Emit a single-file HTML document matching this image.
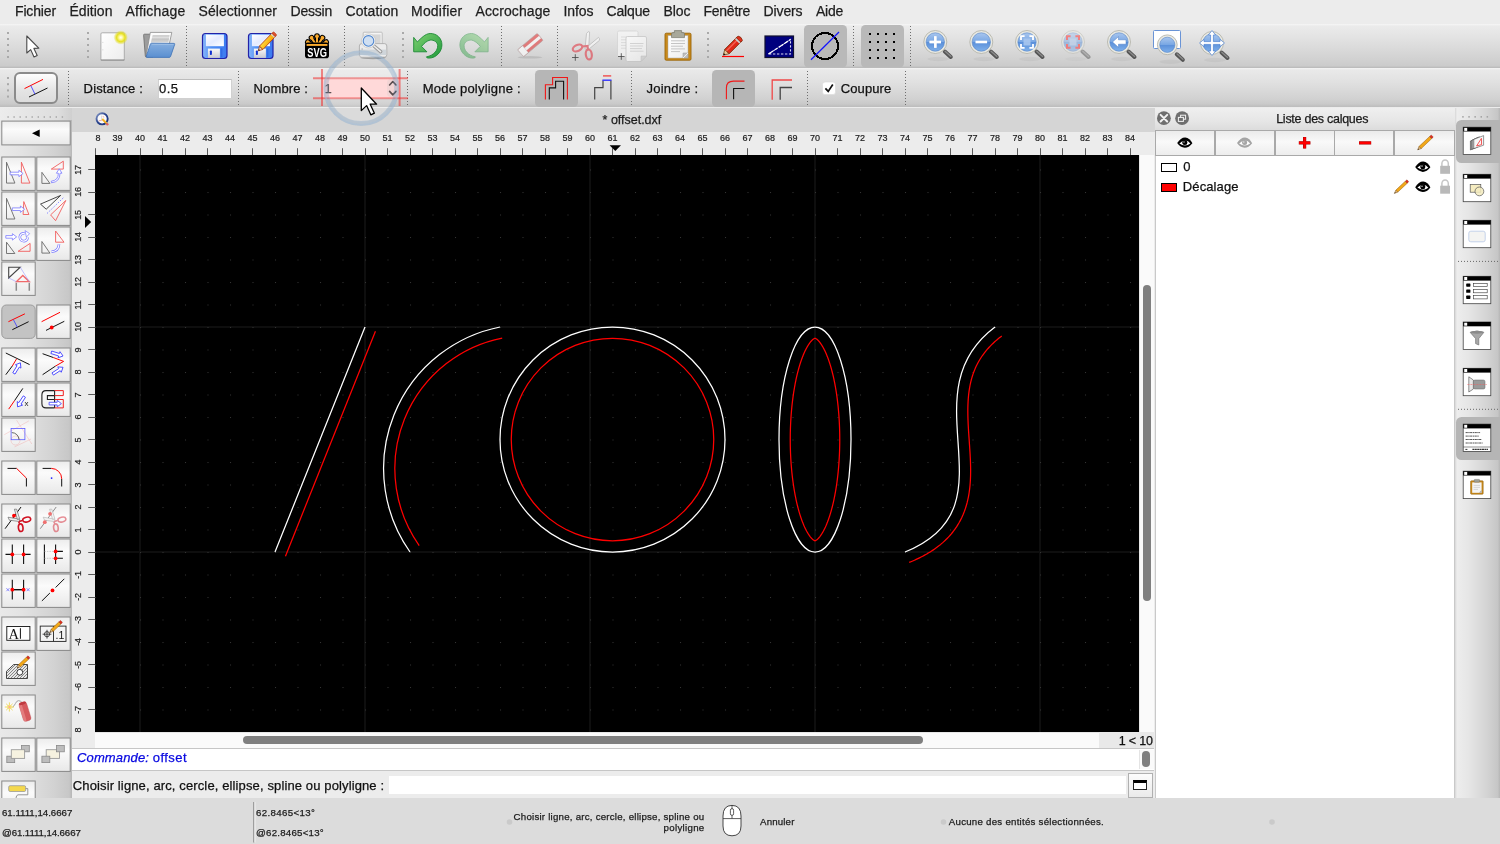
<!DOCTYPE html>
<html lang="fr"><head><meta charset="utf-8"><title>offset.dxf</title>
<style>

html,body{margin:0;padding:0}
body{width:1500px;height:844px;overflow:hidden;background:#ececec;font-family:"Liberation Sans",sans-serif;}
#app{position:relative;width:1500px;height:844px;overflow:hidden;background:#ececec;will-change:transform}
.a{position:absolute}
.t{position:absolute;white-space:pre;font-family:"Liberation Sans",sans-serif;-webkit-text-stroke:0.25px currentColor}
svg{position:absolute;overflow:visible}


#menu{left:0;top:0;width:1500px;height:24px;background:#ececec}


#tb1{left:0;top:24px;width:1500px;height:44px;background:linear-gradient(#f6f6f6 0,#ebebeb 2px,#e3e3e3 30%,#d3d3d3 75%,#cbcbcb 95%,#b8b8b8 100%)}


#tb2{left:0;top:68px;width:1500px;height:39px;background:linear-gradient(#f4f4f4 0,#e9e9e9 2px,#e1e1e1 35%,#d1d1d1 80%,#c9c9c9 92%,#bcbcbc 100%)}
#optbtn{left:13.8px;top:72px;width:40px;height:28px;border:2px solid #8b8b8b;border-radius:6px;background:linear-gradient(#fdfdfd,#e4e4e4 60%,#dcdcdc)}
.inp{background:#fff;border:1px solid #d0d0d0;border-top-color:#bdbdbd;box-sizing:border-box}


#lp{left:0;top:108px;width:72px;height:690px;background:linear-gradient(90deg,#e9e9e9 0,#e3e3e3 30%,#d2d2d2 75%,#c7c7c7 96%,#b6b6b6 100%)}
#lptop{left:0;top:108px;width:72px;height:12px;background:linear-gradient(90deg,#ececec,#dedede 80%,#cfcfcf)}
.lb{position:absolute;box-sizing:border-box;width:34px;height:33px;border:1px solid #919191;background:linear-gradient(#ededed 0,#fbfbfb 35%,#f4f4f4 60%,#e9e9e9 100%)}
.lbs{position:absolute;box-sizing:border-box;width:34px;height:33px;border:1px solid #a8a8a8;border-radius:4.5px;background:#c3c3c3}


#tabbar{left:72px;top:108px;width:1083px;height:24px;background:#d5d5d5}
#hruler{left:72px;top:132px;width:1083px;height:23px;background:#ececec}
#vruler{left:72px;top:155px;width:23px;height:593px;background:#ececec}
#cv{left:95px;top:155px;width:1044px;height:577px;background:#000}
#vsb{left:1139px;top:155px;width:15px;height:577px;background:#fafafa;border-left:1px solid #e6e6e6;box-sizing:border-box}
#hsb{left:95px;top:732px;width:1004px;height:16px;background:#fafafa;border-top:1px solid #e6e6e6;box-sizing:border-box}
.rl{-webkit-text-stroke:0.2px #1c1c1c;position:absolute;font-size:9px;line-height:10px;color:#1c1c1c;white-space:pre;text-align:center;width:20px;letter-spacing:0}
.vl{-webkit-text-stroke:0.2px #1c1c1c;position:absolute;font-size:9px;line-height:10px;color:#1c1c1c;white-space:pre;text-align:center;width:20px;height:10px;transform:rotate(-90deg);transform-origin:50% 50%;letter-spacing:-0.2px}


#lyt{left:1155px;top:108px;width:300px;height:22px;background:linear-gradient(#efefef,#e6e6e6 60%,#dcdcdc)}
#lyl{left:1155px;top:156px;width:300px;height:642px;background:#fff;border-left:1px solid #c9c9c9;border-right:1px solid #c9c9c9;box-sizing:border-box}
#lyb{left:1155px;top:130px;width:300px;height:26px;background:#a9a9a9}
.lyb{position:absolute;top:131px;height:24px;background:linear-gradient(#ebebeb,#f9f9f9 45%,#ededed)}


#rt{left:1455px;top:108px;width:45px;height:690px;background:linear-gradient(90deg,#d6d6d6 0,#ededed 2px,#e6e6e6 30%,#d4d4d4 70%,#c6c6c6 95%,#b6b6b6 100%)}
.rsel{position:absolute;left:1456px;width:44px;height:42.8px;border-radius:5.5px 0 0 5.5px;background:#b5b5b5}


#cmdarea{left:72px;top:748px;width:1083px;height:50px;background:#ececec}
#hist{left:72px;top:748px;width:1082px;height:22.5px;background:#fff;border-top:1.5px solid #c6c6c6;border-bottom:1.5px solid #c6c6c6;box-sizing:border-box}
#cmdin{left:389px;top:776px;width:737px;height:18px;background:#fff}
#cmdbtn{left:1127.5px;top:772.5px;width:25px;height:25px;box-sizing:border-box;border:1px solid #b0b0b0;background:linear-gradient(#fcfcfc,#eaeaea)}
#sb{left:0;top:798px;width:1500px;height:46px;background:#dcdcdc}


</style></head>
<body>
<div id="app">
<!-- p_base -->

<!-- p_menu -->
<div id="menu" class="a"><span class="t" style="left:15.00px;top:4.00px;font-size:14px;line-height:14px;letter-spacing:-0.144px;color:#1e1e1e;">Fichier</span><span class="t" style="left:69.50px;top:4.00px;font-size:14px;line-height:14px;letter-spacing:0.027px;color:#1e1e1e;">Édition</span><span class="t" style="left:125.50px;top:4.00px;font-size:14px;line-height:14px;letter-spacing:0.209px;color:#1e1e1e;">Affichage</span><span class="t" style="left:198.50px;top:4.00px;font-size:14px;line-height:14px;letter-spacing:0.056px;color:#1e1e1e;">Sélectionner</span><span class="t" style="left:290.50px;top:4.00px;font-size:14px;line-height:14px;letter-spacing:-0.216px;color:#1e1e1e;">Dessin</span><span class="t" style="left:345.50px;top:4.00px;font-size:14px;line-height:14px;letter-spacing:0.107px;color:#1e1e1e;">Cotation</span><span class="t" style="left:411.00px;top:4.00px;font-size:14px;line-height:14px;letter-spacing:0.213px;color:#1e1e1e;">Modifier</span><span class="t" style="left:475.50px;top:4.00px;font-size:14px;line-height:14px;letter-spacing:0.107px;color:#1e1e1e;">Accrochage</span><span class="t" style="left:563.50px;top:4.00px;font-size:14px;line-height:14px;letter-spacing:-0.070px;color:#1e1e1e;">Infos</span><span class="t" style="left:606.50px;top:4.00px;font-size:14px;line-height:14px;letter-spacing:-0.144px;color:#1e1e1e;">Calque</span><span class="t" style="left:663.50px;top:4.00px;font-size:14px;line-height:14px;letter-spacing:-0.059px;color:#1e1e1e;">Bloc</span><span class="t" style="left:703.50px;top:4.00px;font-size:14px;line-height:14px;letter-spacing:-0.250px;color:#1e1e1e;">Fenêtre</span><span class="t" style="left:763.50px;top:4.00px;font-size:14px;line-height:14px;letter-spacing:-0.112px;color:#1e1e1e;">Divers</span><span class="t" style="left:816.00px;top:4.00px;font-size:14px;line-height:14px;letter-spacing:-0.255px;color:#1e1e1e;">Aide</span></div>
<!-- p_toolbar -->
<div id="tb1" class="a"></div><svg class="a" style="left:0;top:0" width="1500" height="70" viewBox="0 0 1500 70"><defs>
<linearGradient id="gBlue" x1="0" y1="0" x2="1" y2="0"><stop offset="0" stop-color="#8ab8fa"/><stop offset="0.35" stop-color="#4f8ff5"/><stop offset="1" stop-color="#3b7af0"/></linearGradient>
<linearGradient id="gLabel" x1="0" y1="0" x2="1" y2="1"><stop offset="0" stop-color="#ffffff"/><stop offset="0.5" stop-color="#e4ebff"/><stop offset="1" stop-color="#ffffff"/></linearGradient>
<linearGradient id="gMetal" x1="0" y1="0" x2="0" y2="1"><stop offset="0" stop-color="#fafafa"/><stop offset="1" stop-color="#c8c8d0"/></linearGradient>
<linearGradient id="gPage" x1="0" y1="0" x2="1" y2="1"><stop offset="0" stop-color="#ffffff"/><stop offset="1" stop-color="#ededed"/></linearGradient>
<radialGradient id="gGlow"><stop offset="0" stop-color="#ffffff"/><stop offset="0.25" stop-color="#fff9a0"/><stop offset="0.6" stop-color="#e6e020"/><stop offset="1" stop-color="#e0da20" stop-opacity="0.1"/></radialGradient>
<linearGradient id="gPaperBand" x1="0" y1="0" x2="0" y2="1"><stop offset="0" stop-color="#bdbdbd"/><stop offset="0.3" stop-color="#e0e0e0"/><stop offset="0.55" stop-color="#c4c4c4"/><stop offset="1" stop-color="#d6d6d6"/></linearGradient>
<linearGradient id="gFolder" x1="0" y1="0" x2="0" y2="1"><stop offset="0" stop-color="#86afe0"/><stop offset="1" stop-color="#5a8fd0"/></linearGradient>
<linearGradient id="gLens" x1="0" y1="0" x2="0" y2="1"><stop offset="0" stop-color="#a9c6ee"/><stop offset="0.48" stop-color="#7aa8e4"/><stop offset="0.52" stop-color="#5b90da"/><stop offset="1" stop-color="#7fb0ea"/></linearGradient>
<linearGradient id="gUndo" x1="0" y1="0" x2="1" y2="1"><stop offset="0" stop-color="#7fd070"/><stop offset="1" stop-color="#1f9a3c"/></linearGradient>
<linearGradient id="gPencil" x1="0" y1="0" x2="1" y2="1"><stop offset="0" stop-color="#ffe040"/><stop offset="1" stop-color="#f59a00"/></linearGradient>
</defs><rect x="7" y="32" width="2" height="2" fill="#a9a9a9"/><rect x="7" y="38" width="2" height="2" fill="#a9a9a9"/><rect x="7" y="44" width="2" height="2" fill="#a9a9a9"/><rect x="7" y="50" width="2" height="2" fill="#a9a9a9"/><rect x="7" y="56" width="2" height="2" fill="#a9a9a9"/><rect x="87" y="32" width="2" height="2" fill="#a9a9a9"/><rect x="87" y="38" width="2" height="2" fill="#a9a9a9"/><rect x="87" y="44" width="2" height="2" fill="#a9a9a9"/><rect x="87" y="50" width="2" height="2" fill="#a9a9a9"/><rect x="87" y="56" width="2" height="2" fill="#a9a9a9"/><rect x="402" y="32" width="2" height="2" fill="#a9a9a9"/><rect x="402" y="38" width="2" height="2" fill="#a9a9a9"/><rect x="402" y="44" width="2" height="2" fill="#a9a9a9"/><rect x="402" y="50" width="2" height="2" fill="#a9a9a9"/><rect x="402" y="56" width="2" height="2" fill="#a9a9a9"/><rect x="707" y="32" width="2" height="2" fill="#a9a9a9"/><rect x="707" y="38" width="2" height="2" fill="#a9a9a9"/><rect x="707" y="44" width="2" height="2" fill="#a9a9a9"/><rect x="707" y="50" width="2" height="2" fill="#a9a9a9"/><rect x="707" y="56" width="2" height="2" fill="#a9a9a9"/><line x1="186.5" y1="26" x2="186.5" y2="66" stroke="#6e6e6e" stroke-width="1" stroke-dasharray="1 2"/><line x1="288.5" y1="26" x2="288.5" y2="66" stroke="#6e6e6e" stroke-width="1" stroke-dasharray="1 2"/><line x1="344.5" y1="26" x2="344.5" y2="66" stroke="#6e6e6e" stroke-width="1" stroke-dasharray="1 2"/><line x1="501.5" y1="26" x2="501.5" y2="66" stroke="#6e6e6e" stroke-width="1" stroke-dasharray="1 2"/><line x1="557.5" y1="26" x2="557.5" y2="66" stroke="#6e6e6e" stroke-width="1" stroke-dasharray="1 2"/><line x1="853.5" y1="26" x2="853.5" y2="66" stroke="#6e6e6e" stroke-width="1" stroke-dasharray="1 2"/><line x1="910.5" y1="26" x2="910.5" y2="66" stroke="#6e6e6e" stroke-width="1" stroke-dasharray="1 2"/><path d="M26.8 36 L26.8 53 L30.7 49.6 L34 57 L37.2 55.5 L33.9 48.4 L38.8 48.2 Z" fill="#fff" stroke="#4a4a4a" stroke-width="1.1" stroke-linejoin="round"/><rect x="100.6" y="58.6" width="24" height="2.2" rx="1" fill="#7a7a7a" opacity="0.75"/><rect x="100.9" y="32.8" width="23.4" height="27" rx="1.2" fill="url(#gPage)" stroke="#a6a6a6" stroke-width="0.9"/><path d="M102.2 42.4 H103.4 M102.2 49.8 H103.4" stroke="#cfcfcf" stroke-width="0.7"/><circle cx="120.8" cy="37.5" r="7" fill="url(#gGlow)"/><path d="M143.6 35.2 Q143.4 34.2 144.6 34.2 L151 34.2 L153 57 L146.2 57 Q145.4 57 145.3 56 Z" fill="#9c9c9c" stroke="#6a6a6a" stroke-width="0.8"/><path d="M150.3 32.4 L171.8 32.4 L169.4 43.6 L160 50 L146.2 55.4 Z" fill="#fbfbfb" stroke="#8c8c8c" stroke-width="0.8" stroke-linejoin="round"/><path d="M152.6 35.2 L169.6 35.2 L168.4 42.4 L150.8 42.4 Z" fill="url(#gPaperBand)"/><path d="M151.6 43.2 L174 43.4 Q175 43.5 174.7 44.4 L170.6 56.4 Q170.2 57.4 169.2 57.4 L147 57.4 Q145.8 57.3 146.3 56.2 L150.4 44 Q150.7 43.2 151.6 43.2 Z" fill="url(#gFolder)" stroke="#3f72b6" stroke-width="0.8" stroke-linejoin="round"/><path d="M152 44.4 L173.4 44.6" stroke="#a8c6ea" stroke-width="0.8" opacity="0.8"/><rect x="202.5" y="33.5" width="24.5" height="25" rx="3" fill="url(#gBlue)" stroke="#2222a8" stroke-width="1.2"/><rect x="205.9" y="34.6" width="18" height="11.6" fill="url(#gLabel)"/><rect x="207.9" y="48.6" width="12" height="9.3" fill="url(#gMetal)"/><rect x="209.9" y="50.5" width="2" height="4.6" rx="0.8" fill="#1030d0"/><rect x="220.8" y="48.3" width="1.6" height="9" fill="#2d63e0" opacity="0.7"/><rect x="248.5" y="33.5" width="24.5" height="25" rx="3" fill="url(#gBlue)" stroke="#2222a8" stroke-width="1.2"/><rect x="251.9" y="34.6" width="18" height="11.6" fill="url(#gLabel)"/><rect x="253.9" y="48.6" width="12" height="9.3" fill="url(#gMetal)"/><rect x="255.9" y="50.5" width="2" height="4.6" rx="0.8" fill="#1030d0"/><rect x="266.8" y="48.3" width="1.6" height="9" fill="#2d63e0" opacity="0.7"/><g transform="translate(258.3 50.8) rotate(-46)"><path d="M0 0 L4.2 -2.4 L4.2 2.4 Z" fill="#f0d8a8" stroke="#a03010" stroke-width="0.7"/><path d="M0 0 L1.6 -0.9 L1.6 0.9 Z" fill="#222"/><rect x="4.2" y="-2.4" width="18" height="4.8" fill="url(#gPencil)" stroke="#b03a10" stroke-width="0.8"/><rect x="20.3" y="-2.4" width="1.6" height="4.8" fill="#d8d8d0"/><rect x="21.9" y="-2.4" width="2.4" height="4.8" rx="1" fill="#e05030" stroke="#b03a10" stroke-width="0.6"/></g><g transform="translate(317 46.2) rotate(-66)"><line x1="0" y1="0" x2="0" y2="-9.6" stroke="#000" stroke-width="4.4"/><circle cx="0" cy="-10" r="2.9" fill="#000"/></g><g transform="translate(317 46.2) rotate(-33)"><line x1="0" y1="0" x2="0" y2="-9.6" stroke="#000" stroke-width="4.4"/><circle cx="0" cy="-10" r="2.9" fill="#000"/></g><g transform="translate(317 46.2) rotate(0)"><line x1="0" y1="0" x2="0" y2="-9.6" stroke="#000" stroke-width="4.4"/><circle cx="0" cy="-10" r="2.9" fill="#000"/></g><g transform="translate(317 46.2) rotate(33)"><line x1="0" y1="0" x2="0" y2="-9.6" stroke="#000" stroke-width="4.4"/><circle cx="0" cy="-10" r="2.9" fill="#000"/></g><g transform="translate(317 46.2) rotate(66)"><line x1="0" y1="0" x2="0" y2="-9.6" stroke="#000" stroke-width="4.4"/><circle cx="0" cy="-10" r="2.9" fill="#000"/></g><g transform="translate(317 46.2) rotate(-66)"><line x1="0" y1="0" x2="0" y2="-9.6" stroke="#fbab2f" stroke-width="2"/><circle cx="0" cy="-10" r="1.85" fill="#fbab2f"/></g><g transform="translate(317 46.2) rotate(-33)"><line x1="0" y1="0" x2="0" y2="-9.6" stroke="#fbab2f" stroke-width="2"/><circle cx="0" cy="-10" r="1.85" fill="#fbab2f"/></g><g transform="translate(317 46.2) rotate(0)"><line x1="0" y1="0" x2="0" y2="-9.6" stroke="#fbab2f" stroke-width="2"/><circle cx="0" cy="-10" r="1.85" fill="#fbab2f"/></g><g transform="translate(317 46.2) rotate(33)"><line x1="0" y1="0" x2="0" y2="-9.6" stroke="#fbab2f" stroke-width="2"/><circle cx="0" cy="-10" r="1.85" fill="#fbab2f"/></g><g transform="translate(317 46.2) rotate(66)"><line x1="0" y1="0" x2="0" y2="-9.6" stroke="#fbab2f" stroke-width="2"/><circle cx="0" cy="-10" r="1.85" fill="#fbab2f"/></g><rect x="305" y="42.6" width="24" height="15.6" rx="2.8" fill="#000"/><rect x="306.6" y="44" width="20.8" height="1.9" fill="#fbab2f"/><text x="317.1" y="56.6" text-anchor="middle" font-family="Liberation Sans, sans-serif" font-weight="bold" font-size="12.4" fill="#fff" textLength="19.6" lengthAdjust="spacingAndGlyphs">SVG</text><g><rect x="363.2" y="32.2" width="19" height="13" rx="0.8" fill="#f4f4f4" stroke="#b4b4b4" stroke-width="0.8"/><rect x="372" y="34.4" width="8.6" height="9" fill="#d6d6d6"/><ellipse cx="373" cy="57.8" rx="12.6" ry="1.5" fill="#000" opacity="0.32"/><path d="M359.4 46 Q359.4 43.6 361.8 43.6 L384.4 43.6 Q386.8 43.6 386.8 46 L386.8 54.8 Q386.8 57.2 384.4 57.2 L361.8 57.2 Q359.4 57.2 359.4 54.8 Z" fill="#ececec" stroke="#a4a4a4" stroke-width="0.8"/><rect x="360" y="49.6" width="26.2" height="5.4" fill="#cfd5da"/><path d="M361.4 49 H363" stroke="#999" stroke-width="0.8"/><line x1="374" y1="46" x2="380.6" y2="51.6" stroke="#9a9a9a" stroke-width="3.6" stroke-linecap="round"/><line x1="374" y1="46" x2="380.6" y2="51.6" stroke="#ececec" stroke-width="1.5" stroke-linecap="round"/><circle cx="368.5" cy="40.9" r="7.1" fill="#f2f2f0" stroke="#c0c0c0" stroke-width="0.6"/><circle cx="368.5" cy="40.9" r="5.3" fill="#cfdff2" stroke="#4f86d0" stroke-width="1.1"/></g><path d="M413.7 37.4 L413.7 51.8 L426.9 51.8 L421.5 46.4 C424 43.5 427 40.5 430.2 40.1 C434 39.8 437.5 42 437.7 45.5 C437.9 50 434 55.5 426.3 56.9 C427 58 428 58.2 429.5 58.1 C436 57.8 441.8 52 441.9 45 C442 38 436.5 33.4 430.2 33.5 C425 33.7 421 38.5 417.3 41.9 Z" fill="url(#gUndo)" stroke="#1c8a34" stroke-width="0.9" stroke-linejoin="round"/><g transform="translate(901.8 0) scale(-1 1)" opacity="0.45"><path d="M413.7 37.4 L413.7 51.8 L426.9 51.8 L421.5 46.4 C424 43.5 427 40.5 430.2 40.1 C434 39.8 437.5 42 437.7 45.5 C437.9 50 434 55.5 426.3 56.9 C427 58 428 58.2 429.5 58.1 C436 57.8 441.8 52 441.9 45 C442 38 436.5 33.4 430.2 33.5 C425 33.7 421 38.5 417.3 41.9 Z" fill="url(#gUndo)" stroke="#1c8a34" stroke-width="0.9" stroke-linejoin="round"/></g><ellipse cx="530" cy="57.3" rx="12.5" ry="1.3" fill="#000" opacity="0.10"/><g transform="translate(520.6 53.2) rotate(-40)" opacity="0.66"><rect x="0" y="-4.6" width="25.5" height="9.2" rx="1" fill="#e04848"/><rect x="0" y="-1.5" width="25.5" height="3.2" fill="#fafafa"/><rect x="-0.5" y="-4.6" width="6.8" height="9.2" fill="#fdfdfd" stroke="#bbb" stroke-width="0.5"/><rect x="0" y="-4.6" width="25.5" height="9.2" rx="1" fill="none" stroke="#a08080" stroke-width="0.6"/></g><g opacity="0.62"><path d="M585 49 L586.5 33.5 Q588.5 30.5 589.6 32 L588.6 50 Z" fill="#fbfbfb" stroke="#9a9a9a" stroke-width="0.7"/><path d="M587 47 L598.5 37.4 Q600 38.5 599.4 40.4 L589.5 48.6 Z" fill="#fbfbfb" stroke="#9a9a9a" stroke-width="0.7"/><ellipse cx="577.5" cy="48" rx="5" ry="3" transform="rotate(-25 577.5 48)" fill="none" stroke="#e0404c" stroke-width="2.2"/><ellipse cx="588.8" cy="54.5" rx="3" ry="5" transform="rotate(-8 588.8 54.5)" fill="none" stroke="#e0404c" stroke-width="2.2"/><path d="M582 46.5 L587.5 46 L587.8 50" fill="none" stroke="#e0404c" stroke-width="2.2"/></g><path d="M572 57.5 H578.6 M575.3 54.2 V60.8" stroke="#444" stroke-width="0.8" fill="none"/><g opacity="0.75"><rect x="617.5" y="31" width="20.5" height="26" rx="1.5" fill="#f6f6f6" stroke="#cfcfcf" stroke-width="0.8"/><path d="M621 37 H633 M621 39.8 H633 M621 42.6 H633 M621 45.4 H633 M621 48.2 H633" stroke="#d8d8d8" stroke-width="1"/><path d="M627.5 36.5 L645 36.5 Q646.5 36.5 646.5 38 L646.5 56 L641 61.5 L627.5 61.5 Q626 61.5 626 60 L626 38 Q626 36.5 627.5 36.5 Z" fill="url(#gPage)" stroke="#bdbdbd" stroke-width="0.8"/><path d="M646.5 56 L641 56 L641 61.5 Z" fill="#cfcfcf" stroke="#b4b4b4" stroke-width="0.5"/><path d="M630 43.5 H643.5 M630 46 H643 M630 48.6 H642 M630 51.2 H643.5" stroke="#cfcfcf" stroke-width="1"/></g><path d="M618 56.5 H624.6 M621.3 53.2 V59.8" stroke="#444" stroke-width="0.8" fill="none"/><rect x="665" y="33.2" width="26" height="27" rx="1.2" fill="#c98a1c" stroke="#9a6408" stroke-width="0.9"/><rect x="668" y="35.6" width="20" height="22.4" fill="url(#gPage)" stroke="#aaa" stroke-width="0.5"/><path d="M671 40.8 H685 M671 43.5 H685 M671 46.2 H683 M671 48.9 H685 M671 51.6 H680" stroke="#c4c4c4" stroke-width="1"/><path d="M688 53 L683 53 L683 58 L688 58 Z" fill="#c0c0c0" stroke="#999" stroke-width="0.5"/><path d="M683 58 L688 53" stroke="#eee" stroke-width="1"/><path d="M671.5 37.6 L671.5 34 Q671.5 32.6 673 32.6 L674.4 32.6 L674.4 30.6 L681.6 30.6 L681.6 32.6 L683 32.6 Q684.5 32.6 684.5 34 L684.5 37.6 Z" fill="#a8a89a" stroke="#77776c" stroke-width="0.7"/><line x1="722" y1="56.5" x2="744" y2="56.5" stroke="#f00" stroke-width="1.2"/><g transform="translate(723.3 55.2) rotate(-45)"><path d="M0 0 L5.2 -3.1 L5.2 3.1 Z" fill="#e8c898" stroke="#6a3a10" stroke-width="0.7"/><path d="M0 0 L1.9 -1.1 L1.9 1.1 Z" fill="#111"/><rect x="5.2" y="-3.1" width="17.5" height="6.2" fill="#e02818" stroke="#7a2a08" stroke-width="0.8"/><rect x="5.2" y="-1.6" width="17.5" height="1.5" fill="#f87060" opacity="0.8"/><rect x="19.6" y="-3.1" width="2" height="6.2" fill="#d0d0d0"/><path d="M21.6 -3.1 L24 -3.1 Q26 0 24 3.1 L21.6 3.1 Z" fill="#e03020" stroke="#7a2a08" stroke-width="0.7"/></g><rect x="765" y="36" width="28.5" height="21.5" fill="#00007e" stroke="#101030" stroke-width="1.2"/><path d="M768.5 54 L790.5 39.5 L790.5 54 Z" fill="none" stroke="#d8d8f0" stroke-width="1.1" stroke-dasharray="2.4 1.6"/><line x1="768.5" y1="54" x2="790.5" y2="39.5" stroke="#fff" stroke-width="1.1" stroke-dasharray="5 1.2"/><rect x="804" y="25" width="43" height="42.5" rx="4.5" fill="#b9b9b9"/><circle cx="825" cy="46" r="13" fill="none" stroke="#000" stroke-width="2" shape-rendering="crispEdges"/><line x1="811" y1="59.8" x2="839" y2="32" stroke="#1414ff" stroke-width="1.2"/><rect x="861" y="25" width="43" height="42.5" rx="4.5" fill="#b9b9b9"/><rect x="869" y="33" width="2" height="2" fill="#000"/><rect x="869" y="41" width="2" height="2" fill="#000"/><rect x="869" y="49" width="2" height="2" fill="#000"/><rect x="869" y="57" width="2" height="2" fill="#000"/><rect x="877" y="33" width="2" height="2" fill="#000"/><rect x="877" y="41" width="2" height="2" fill="#000"/><rect x="877" y="49" width="2" height="2" fill="#000"/><rect x="877" y="57" width="2" height="2" fill="#000"/><rect x="885" y="33" width="2" height="2" fill="#000"/><rect x="885" y="41" width="2" height="2" fill="#000"/><rect x="885" y="49" width="2" height="2" fill="#000"/><rect x="885" y="57" width="2" height="2" fill="#000"/><rect x="893" y="33" width="2" height="2" fill="#000"/><rect x="893" y="41" width="2" height="2" fill="#000"/><rect x="893" y="49" width="2" height="2" fill="#000"/><rect x="893" y="57" width="2" height="2" fill="#000"/><g opacity="1"><ellipse cx="938.3" cy="59" rx="11" ry="2.2" fill="#000" opacity="0.04"/><line x1="944.8" y1="51.5" x2="950.8" y2="57" stroke="#555" stroke-width="4" stroke-linecap="round"/><line x1="945.1" y1="51.2" x2="950.9" y2="56.4" stroke="#8a8a8a" stroke-width="1.4" stroke-linecap="round"/><circle cx="935.3" cy="42" r="11.5" fill="#e9e9e2" stroke="#aeaea4" stroke-width="0.8"/><circle cx="935.3" cy="42" r="9.2" fill="url(#gLens)" stroke="#5585c8" stroke-width="0.6"/><path d="M929.6 42 H941 M935.3 36.3 V47.7" stroke="#fff" stroke-width="2.6"/><path d="M929.6 42 H941 M935.3 36.3 V47.7" stroke="#5585c8" stroke-width="3.4" opacity="0.25"/><path d="M929.6 42 H941 M935.3 36.3 V47.7" stroke="#fff" stroke-width="2.4"/></g><g opacity="1"><ellipse cx="984.3" cy="59" rx="11" ry="2.2" fill="#000" opacity="0.04"/><line x1="990.8" y1="51.5" x2="996.8" y2="57" stroke="#555" stroke-width="4" stroke-linecap="round"/><line x1="991.1" y1="51.2" x2="996.9" y2="56.4" stroke="#8a8a8a" stroke-width="1.4" stroke-linecap="round"/><circle cx="981.3" cy="42" r="11.5" fill="#e9e9e2" stroke="#aeaea4" stroke-width="0.8"/><circle cx="981.3" cy="42" r="9.2" fill="url(#gLens)" stroke="#5585c8" stroke-width="0.6"/><path d="M975.5 42 H987.1" stroke="#fff" stroke-width="2.6"/></g><g opacity="1"><ellipse cx="1030" cy="59" rx="11" ry="2.2" fill="#000" opacity="0.04"/><line x1="1036.5" y1="51.5" x2="1042.5" y2="57" stroke="#555" stroke-width="4" stroke-linecap="round"/><line x1="1036.8" y1="51.2" x2="1042.6" y2="56.4" stroke="#8a8a8a" stroke-width="1.4" stroke-linecap="round"/><circle cx="1027" cy="42" r="11.5" fill="#e9e9e2" stroke="#aeaea4" stroke-width="0.8"/><circle cx="1027" cy="42" r="9.2" fill="url(#gLens)" stroke="#5585c8" stroke-width="0.6"/><rect x="1023.5" y="38.5" width="7" height="7" fill="#a9c6ee" opacity="0.9"/><path d="M1021 40 V36.2 H1024.6 M1029.4 36.2 H1033 V40 M1033 44 V47.8 H1029.4 M1024.6 47.8 H1021 V44" fill="none" stroke="#fff" stroke-width="1.8"/></g><g opacity="0.5"><ellipse cx="1076" cy="59" rx="11" ry="2.2" fill="#000" opacity="0.04"/><line x1="1082.5" y1="51.5" x2="1088.5" y2="57" stroke="#555" stroke-width="4" stroke-linecap="round"/><line x1="1082.8" y1="51.2" x2="1088.6" y2="56.4" stroke="#8a8a8a" stroke-width="1.4" stroke-linecap="round"/><circle cx="1073" cy="42" r="11.5" fill="#e9e9e2" stroke="#aeaea4" stroke-width="0.8"/><circle cx="1073" cy="42" r="9.2" fill="url(#gLens)" stroke="#5585c8" stroke-width="0.6"/><rect x="1069.5" y="38.5" width="7" height="7" fill="#a9c6ee" opacity="0.9"/><path d="M1067 40 V36.2 H1070.6 M1075.4 36.2 H1079 V40 M1079 44 V47.8 H1075.4 M1070.6 47.8 H1067 V44" fill="none" stroke="#ff2020" stroke-width="2"/></g><g opacity="1"><ellipse cx="1122" cy="59" rx="11" ry="2.2" fill="#000" opacity="0.04"/><line x1="1128.5" y1="51.5" x2="1134.5" y2="57" stroke="#555" stroke-width="4" stroke-linecap="round"/><line x1="1128.8" y1="51.2" x2="1134.6" y2="56.4" stroke="#8a8a8a" stroke-width="1.4" stroke-linecap="round"/><circle cx="1119" cy="42" r="11.5" fill="#e9e9e2" stroke="#aeaea4" stroke-width="0.8"/><circle cx="1119" cy="42" r="9.2" fill="url(#gLens)" stroke="#5585c8" stroke-width="0.6"/><path d="M1112.5 42 L1118.5 36.6 L1118.5 39.8 L1126 39.8 L1126 44.2 L1118.5 44.2 L1118.5 47.4 Z" fill="#fff" stroke="#4a7cc4" stroke-width="0.5"/></g><rect x="1153.5" y="30.5" width="27" height="18" rx="1" fill="#fff" stroke="#6a94d6" stroke-width="1"/><g opacity="1"><ellipse cx="1170.3" cy="61.8" rx="11" ry="2.2" fill="#000" opacity="0.04"/><line x1="1176.8" y1="54.3" x2="1182.8" y2="59.8" stroke="#555" stroke-width="4" stroke-linecap="round"/><line x1="1177.1" y1="54" x2="1182.9" y2="59.2" stroke="#8a8a8a" stroke-width="1.4" stroke-linecap="round"/><circle cx="1167.3" cy="44.8" r="9.9" fill="#e9e9e2" stroke="#aeaea4" stroke-width="0.8"/><circle cx="1167.3" cy="44.8" r="7.6" fill="url(#gLens)" stroke="#5585c8" stroke-width="0.6"/></g><g opacity="1"><ellipse cx="1215" cy="60" rx="11" ry="2.2" fill="#000" opacity="0.04"/><line x1="1221.5" y1="52.5" x2="1227.5" y2="58" stroke="#555" stroke-width="4" stroke-linecap="round"/><line x1="1221.8" y1="52.2" x2="1227.6" y2="57.4" stroke="#8a8a8a" stroke-width="1.4" stroke-linecap="round"/><circle cx="1212" cy="43" r="11.5" fill="#e9e9e2" stroke="#aeaea4" stroke-width="0.8"/><circle cx="1212" cy="43" r="9.2" fill="url(#gLens)" stroke="#5585c8" stroke-width="0.6"/><path d="M1199.5 43 L1204 39.4 L1204 41.6 L1210.6 41.6 L1210.6 35 L1208.4 35 L1212 30.5 L1215.6 35 L1213.4 35 L1213.4 41.6 L1220 41.6 L1220 39.4 L1224.5 43 L1220 46.6 L1220 44.4 L1213.4 44.4 L1213.4 51 L1215.6 51 L1212 55.5 L1208.4 51 L1210.6 51 L1210.6 44.4 L1204 44.4 L1204 46.6 Z" fill="#fff" stroke="#4a80d0" stroke-width="0.7"/></g></svg>
<!-- p_options -->
<div id="tb2" class="a"></div><div id="optbtn" class="a"></div><div class="a inp" style="left:157.5px;top:79px;width:74px;height:19.5px"></div><div class="a" style="left:535px;top:70px;width:43px;height:36.5px;border-radius:4.5px;background:#b6b6b6"></div><div class="a" style="left:712px;top:70px;width:43px;height:36.5px;border-radius:4.5px;background:#b6b6b6"></div><div class="a" style="left:322px;top:78.5px;width:77.5px;height:19.5px;background:#ffd2d2;border-radius:2px"></div><div class="a" style="left:386.6px;top:79px;width:12.4px;height:18px;background:#f0cccc;border-radius:4px"></div><svg class="a" style="left:0;top:0" width="1500" height="110" viewBox="0 0 1500 110"><rect x="7" y="77" width="2" height="2" fill="#a9a9a9"/><rect x="7" y="83.2" width="2" height="2" fill="#a9a9a9"/><rect x="7" y="89.4" width="2" height="2" fill="#a9a9a9"/><rect x="7" y="95.6" width="2" height="2" fill="#a9a9a9"/><line x1="68.5" y1="71" x2="68.5" y2="105" stroke="#6e6e6e" stroke-width="1" stroke-dasharray="1 2"/><line x1="238.5" y1="71" x2="238.5" y2="105" stroke="#6e6e6e" stroke-width="1" stroke-dasharray="1 2"/><line x1="407.5" y1="71" x2="407.5" y2="105" stroke="#6e6e6e" stroke-width="1" stroke-dasharray="1 2"/><line x1="631.5" y1="71" x2="631.5" y2="105" stroke="#6e6e6e" stroke-width="1" stroke-dasharray="1 2"/><line x1="807.5" y1="71" x2="807.5" y2="105" stroke="#6e6e6e" stroke-width="1" stroke-dasharray="1 2"/><line x1="905.5" y1="71" x2="905.5" y2="105" stroke="#6e6e6e" stroke-width="1" stroke-dasharray="1 2"/><line x1="24.5" y1="88.6" x2="43" y2="79.4" stroke="#f00" stroke-width="1"/><line x1="29" y1="97" x2="47.5" y2="88" stroke="#111" stroke-width="1"/><line x1="30.8" y1="85.6" x2="35" y2="94.2" stroke="#4040ff" stroke-width="0.9"/><g stroke="#f03030" stroke-opacity="0.55" stroke-width="2"><line x1="313" y1="78.3" x2="408" y2="78.3"/><line x1="313" y1="98.2" x2="408" y2="98.2"/><line x1="322" y1="69" x2="322" y2="106"/><line x1="399.6" y1="69" x2="399.6" y2="106"/></g><path d="M389.6 85 L392.8 81.5 L396 85 M389.6 91.4 L392.8 94.9 L396 91.4" fill="none" stroke="#3a2a2c" stroke-width="1.6" stroke-linecap="round" stroke-linejoin="round"/><path d="M549.3 99.5 V87.9 H555.6 V81.2 H563.6 V99.5" fill="none" stroke="#111" stroke-width="1.1"/><path d="M545.4 99.5 V84.8 H552.6 V77.5 H567.4 V99.5" fill="none" stroke="#f01818" stroke-width="1.1"/><path d="M594.7 99.5 V87.7 H603 V80.4 M610.9 80.4 V99.5" fill="none" stroke="#444" stroke-width="1.2"/><line x1="602.4" y1="80.2" x2="611.5" y2="80.2" stroke="#3030ff" stroke-width="1.4"/><line x1="603" y1="75.9" x2="611.2" y2="75.9" stroke="#f04040" stroke-width="1.3"/><path d="M726.4 99.3 V88 Q726.4 81.1 733.5 81.1 H744.5" fill="none" stroke="#f01818" stroke-width="1.1"/><path d="M733.6 99.3 V88.5 H744.5" fill="none" stroke="#111" stroke-width="1.1"/><path d="M772.2 99.8 V80 H792" fill="none" stroke="#f04848" stroke-width="1.3"/><path d="M780.2 99.8 V87.5 H792" fill="none" stroke="#444" stroke-width="1.3"/><rect x="822.5" y="82" width="13" height="12.6" rx="2.6" fill="#fff" stroke="#d8d8d8" stroke-width="0.6"/><path d="M825.4 88.4 L828.2 91.4 L832.8 84.6" fill="none" stroke="#111" stroke-width="1.7"/></svg><span class="t" style="left:83.60px;top:82.40px;font-size:13px;line-height:13px;letter-spacing:0.160px;color:#111;">Distance :</span><span class="t" style="left:159.00px;top:82.40px;font-size:13px;line-height:13px;letter-spacing:0.476px;color:#111;">0.5</span><span class="t" style="left:253.60px;top:82.40px;font-size:13px;line-height:13px;letter-spacing:0.117px;color:#111;">Nombre :</span><span class="t" style="left:324.60px;top:82.40px;font-size:13px;line-height:13px;letter-spacing:0.000px;color:#3c3032;">1</span><span class="t" style="left:422.80px;top:82.40px;font-size:13px;line-height:13px;letter-spacing:0.208px;color:#111;">Mode polyligne :</span><span class="t" style="left:646.60px;top:82.40px;font-size:13px;line-height:13px;letter-spacing:0.215px;color:#111;">Joindre :</span><span class="t" style="left:840.80px;top:82.40px;font-size:13px;line-height:13px;letter-spacing:0.104px;color:#111;">Coupure</span>
<!-- p_left -->
<div id="lp" class="a"></div><div id="lptop" class="a"></div><svg class="a" style="left:0;top:108px" width="72" height="690" viewBox="0 108 72 690"><clipPath id="lpc"><rect x="0" y="108" width="72" height="690"/></clipPath><g clip-path="url(#lpc)"><defs><linearGradient id="gBtn" x1="0" y1="0" x2="0" y2="1"><stop offset="0" stop-color="#ececec"/><stop offset="0.35" stop-color="#fbfbfb"/><stop offset="0.6" stop-color="#f4f4f4"/><stop offset="1" stop-color="#e8e8e8"/></linearGradient></defs><rect x="1.8" y="121.1" width="68.4" height="23.8" fill="url(#gBtn)" stroke="#888" stroke-width="1"/><rect x="1.8" y="157" width="33.4" height="33.4" fill="url(#gBtn)" stroke="#888" stroke-width="1"/><rect x="36.8" y="157" width="33.4" height="33.4" fill="url(#gBtn)" stroke="#888" stroke-width="1"/><rect x="1.8" y="192" width="33.4" height="33.4" fill="url(#gBtn)" stroke="#888" stroke-width="1"/><rect x="36.8" y="192" width="33.4" height="33.4" fill="url(#gBtn)" stroke="#888" stroke-width="1"/><rect x="1.8" y="227" width="33.4" height="33.4" fill="url(#gBtn)" stroke="#888" stroke-width="1"/><rect x="36.8" y="227" width="33.4" height="33.4" fill="url(#gBtn)" stroke="#888" stroke-width="1"/><rect x="1.8" y="262" width="33.4" height="33.4" fill="url(#gBtn)" stroke="#888" stroke-width="1"/><rect x="1.8" y="305" width="33.4" height="33.4" rx="4.5" fill="#c3c3c3" stroke="#9c9c9c" stroke-width="1"/><rect x="36.8" y="305" width="33.4" height="33.4" fill="url(#gBtn)" stroke="#888" stroke-width="1"/><rect x="1.8" y="348" width="33.4" height="33.4" fill="url(#gBtn)" stroke="#888" stroke-width="1"/><rect x="36.8" y="348" width="33.4" height="33.4" fill="url(#gBtn)" stroke="#888" stroke-width="1"/><rect x="1.8" y="383" width="33.4" height="33.4" fill="url(#gBtn)" stroke="#888" stroke-width="1"/><rect x="36.8" y="383" width="33.4" height="33.4" fill="url(#gBtn)" stroke="#888" stroke-width="1"/><rect x="1.8" y="418" width="33.4" height="33.4" fill="url(#gBtn)" stroke="#888" stroke-width="1"/><rect x="1.8" y="461" width="33.4" height="33.4" fill="url(#gBtn)" stroke="#888" stroke-width="1"/><rect x="36.8" y="461" width="33.4" height="33.4" fill="url(#gBtn)" stroke="#888" stroke-width="1"/><rect x="1.8" y="504" width="33.4" height="33.4" fill="url(#gBtn)" stroke="#888" stroke-width="1"/><rect x="36.8" y="504" width="33.4" height="33.4" fill="url(#gBtn)" stroke="#888" stroke-width="1"/><rect x="1.8" y="539" width="33.4" height="33.4" fill="url(#gBtn)" stroke="#888" stroke-width="1"/><rect x="36.8" y="539" width="33.4" height="33.4" fill="url(#gBtn)" stroke="#888" stroke-width="1"/><rect x="1.8" y="574" width="33.4" height="33.4" fill="url(#gBtn)" stroke="#888" stroke-width="1"/><rect x="36.8" y="574" width="33.4" height="33.4" fill="url(#gBtn)" stroke="#888" stroke-width="1"/><rect x="1.8" y="617" width="33.4" height="33.4" fill="url(#gBtn)" stroke="#888" stroke-width="1"/><rect x="36.8" y="617" width="33.4" height="33.4" fill="url(#gBtn)" stroke="#888" stroke-width="1"/><rect x="1.8" y="652" width="33.4" height="33.4" fill="url(#gBtn)" stroke="#888" stroke-width="1"/><rect x="1.8" y="695" width="33.4" height="33.4" fill="url(#gBtn)" stroke="#888" stroke-width="1"/><rect x="1.8" y="738" width="33.4" height="33.4" fill="url(#gBtn)" stroke="#888" stroke-width="1"/><rect x="36.8" y="738" width="33.4" height="33.4" fill="url(#gBtn)" stroke="#888" stroke-width="1"/><rect x="1.8" y="781" width="33.4" height="33.4" fill="url(#gBtn)" stroke="#888" stroke-width="1"/><rect x="7.4" y="116.3" width="1.4" height="1.4" fill="#a2a2a2"/><rect x="13.4" y="116.3" width="1.4" height="1.4" fill="#a2a2a2"/><rect x="19.5" y="116.3" width="1.4" height="1.4" fill="#a2a2a2"/><rect x="25.5" y="116.3" width="1.4" height="1.4" fill="#a2a2a2"/><rect x="31.5" y="116.3" width="1.4" height="1.4" fill="#a2a2a2"/><rect x="37.6" y="116.3" width="1.4" height="1.4" fill="#a2a2a2"/><rect x="43.6" y="116.3" width="1.4" height="1.4" fill="#a2a2a2"/><rect x="49.6" y="116.3" width="1.4" height="1.4" fill="#a2a2a2"/><rect x="55.6" y="116.3" width="1.4" height="1.4" fill="#a2a2a2"/><rect x="61.7" y="116.3" width="1.4" height="1.4" fill="#a2a2a2"/><path d="M39.7 129.4 V136.9 L32 133.15 Z" fill="#000"/><g fill="none" stroke-width="0.9" stroke-linejoin="miter"><path d="M6.5 162.2 V183.1 H14.9 Z" stroke="#6a6a6a"/><path d="M21.4 162.2 V183.1 H29.9 Z" stroke="#f05c5c"/><path d="M10.1 172.2 H18.9 V170.3 L23.1 173.5 L18.9 176.7 V174.8 H10.1 Z" fill="#fff" stroke="#7a7aff" stroke-width="0.8" stroke-linejoin="round"/><path d="M41.9 172.3 V183.4 H49.9 Z" stroke="#6a6a6a"/><path d="M51.3 169.1 L63.3 161.2 V169.1 Z" stroke="#f05c5c"/><path d="M51.3 181.2 Q58.4 180.4 58.4 173.2 H56.4 L59.2 168.8 L62 173.2 H60 Q60 182 51.5 182.8 Z" fill="#fff" stroke="#7a7aff" stroke-width="0.8"/><path d="M6.5 198.3 V219 H14.9 Z" stroke="#6a6a6a"/><path d="M23.8 201.6 L23.1 214.5 H28.9 Z" stroke="#f05c5c"/><path d="M12.3 207.9 H20.4 V206.0 L24.6 209.2 L20.4 212.4 V210.5 H12.3 Z" fill="#fff" stroke="#7a7aff" stroke-width="0.8" stroke-linejoin="round"/><path d="M40.5 204.1 L60.7 195.4 L46.2 209.2 Z" stroke="#333"/><path d="M50.6 214.9 L65.8 200.5 L55.6 220.7 Z" stroke="#f05c5c"/><line x1="47" y1="213.5" x2="64.3" y2="196.9" stroke="#7a7aff" stroke-dasharray="1.6 1.4"/><path d="M5.8 235.6 H12.4 V233.7 L16.6 236.9 L12.4 240.1 V238.2 H5.8 Z" fill="#fff" stroke="#7a7aff" stroke-width="0.8" stroke-linejoin="round"/><path d="M27.6 237.4 A3.9 3.9 0 1 1 24.6 233.4" stroke="#7a7aff" stroke-width="2.6"/><path d="M27.6 237.4 A3.9 3.9 0 1 1 24.6 233.4" stroke="#fff" stroke-width="1.2"/><path d="M25 230.6 L29.6 233.6 L26.4 237 Z" fill="#fff" stroke="#7a7aff" stroke-width="0.7"/><path d="M6.5 242.2 V253.5 H14.9 Z" stroke="#6a6a6a"/><path d="M18.1 251.3 L30.1 243.4 V251.3 Z" stroke="#f05c5c"/><path d="M41.9 241.5 V253.1 H49.9 Z" stroke="#6a6a6a"/><path d="M55.6 231 V242.2 H64 Z" stroke="#f05c5c"/><path d="M51.5 251.8 Q58.6 251.2 59 244.2" stroke="#7a7aff" stroke-width="2.6"/><path d="M51.5 251.8 Q58.6 251.2 59 244.2" stroke="#fff" stroke-width="1.1"/><path d="M8.7 267.2 H20.2 L8.7 277.9 Z" stroke="#444" stroke-width="1.1"/><path d="M16.3 290.8 V282.7 M29.3 290.8 V282.7" stroke="#8a8a8a" stroke-width="1.5"/><path d="M16.3 281.7 L22.8 275.5 L29.3 281.7 Z" stroke="#f06a6a" stroke-width="1.3"/><path d="M20.2 267.2 L29.3 281.7 M8.7 277.9 L16.3 281.7" stroke="#9a9aff" stroke-width="0.6"/><line x1="8.4" y1="321.7" x2="24.9" y2="313.8" stroke="#f00" stroke-width="1"/><line x1="12.3" y1="329.7" x2="28.6" y2="321.7" stroke="#111" stroke-width="1"/><line x1="13.3" y1="319.5" x2="17.3" y2="327.2" stroke="#3a3aff" stroke-width="0.8"/><line x1="41.6" y1="321.7" x2="60" y2="312.3" stroke="#f00" stroke-width="1"/><line x1="46" y1="330.4" x2="64.3" y2="321.3" stroke="#111" stroke-width="1"/><circle cx="51.7" cy="327.5" r="1.9" fill="#f00"/><path d="M5.8 353 L29.6 364.6 M5.8 374.7 L12.3 366" stroke="#111" stroke-width="1"/><line x1="12.3" y1="366" x2="16.6" y2="358.8" stroke="#f00" stroke-width="1"/><g transform="translate(13.9 373.4) rotate(-58.5)"><path d="M0.0 -1.3 H8.2 V-3.2 L12.4 0.0 L8.2 3.2 V1.3 H0.0 Z" fill="#fff" stroke="#3a3aff" stroke-width="0.8" stroke-linejoin="round"/></g><path d="M42.6 353.7 L53.5 357.6 M42.6 374.7 L55.6 366" stroke="#111" stroke-width="1"/><path d="M53.5 357.6 L63.6 361.4 L55.6 366" stroke="#f00" stroke-width="1"/><g transform="translate(51.3 352.3) rotate(17.5)"><path d="M0.0 -1.3 H8.1 V-3.2 L12.3 0.0 L8.1 3.2 V1.3 H0.0 Z" fill="#fff" stroke="#3a3aff" stroke-width="0.8" stroke-linejoin="round"/></g><g transform="translate(52.7 374.0) rotate(-33.0)"><path d="M0.0 -1.3 H8.1 V-3.2 L12.3 0.0 L8.1 3.2 V1.3 H0.0 Z" fill="#fff" stroke="#3a3aff" stroke-width="0.8" stroke-linejoin="round"/></g><line x1="22.8" y1="388.4" x2="14.5" y2="400.7" stroke="#111" stroke-width="1"/><line x1="14.5" y1="400.7" x2="8.7" y2="409.1" stroke="#f00" stroke-width="1"/><g transform="translate(24.4 396.6) rotate(123.7)"><path d="M0.0 -1.3 H8.1 V-3.2 L12.3 0.0 L8.1 3.2 V1.3 H0.0 Z" fill="#fff" stroke="#3a3aff" stroke-width="0.8" stroke-linejoin="round"/></g><text x="24.6" y="405.6" font-family="Liberation Sans, sans-serif" font-size="8" fill="#222" stroke="none">x</text><path d="M54.6 390.6 H46 Q41.9 390.6 41.9 395 V403.5 Q41.9 407.9 46 407.9 H54.6 M54.6 395.6 H47.4 V399.5 H54.6 M54.6 390.6 V407.9" stroke="#222" stroke-width="1.1"/><path d="M54.6 390.6 H63.3 V395.6 H54.6 M54.6 399.5 H63.3 V407.9 H54.6" stroke="#f02020" stroke-width="1"/><path d="M49.1 402.3 H57.2 V400.4 L61.4 403.6 L57.2 406.8 V404.9 H49.1 Z" fill="#fff" stroke="#3a3aff" stroke-width="0.8" stroke-linejoin="round"/><g opacity="0.35" stroke="#f06060" stroke-width="0.6"><path d="M4.3 434.7 L28.9 420.9 M16.6 420.2 L31.8 444 M14.5 446.9 L31.1 439"/><circle cx="15.5" cy="440.5" r="4.5"/></g><rect x="11.1" y="428.4" width="13.8" height="11.3" stroke="#5a5aff" stroke-width="0.8"/><path d="M11.8 432.6 A7.2 7.2 0 0 1 19 439.7" stroke="#444" stroke-width="0.8"/><path d="M7.5 468.4 H16.6 M26.4 478.1 V486.5" stroke="#111" stroke-width="1"/><line x1="16.6" y1="468.4" x2="26.4" y2="478.1" stroke="#f00" stroke-width="1"/><path d="M42.6 468.4 H51.3 M61.7 478.8 V486.5" stroke="#111" stroke-width="1"/><path d="M51.3 468.4 A10.4 10.4 0 0 1 61.7 478.8" stroke="#f00" stroke-width="1"/><circle cx="51.6" cy="478.1" r="0.9" fill="#2020ff"/><g transform="translate(0 0)" opacity="1"><line x1="5.1" y1="528.7" x2="21" y2="507" stroke="#111" stroke-width="1"/><path d="M8 517.2 L19.6 519.2 L19.8 521.6 L9.4 520.2 Z" fill="#eee" stroke="#555" stroke-width="0.6"/><path d="M14.4 509.2 L16.6 509.2 L19.6 518.6 L17.4 519.4 Z" fill="#eee" stroke="#555" stroke-width="0.6"/><ellipse cx="26.7" cy="519.6" rx="4" ry="2.4" transform="rotate(-12 26.7 519.6)" fill="none" stroke="#d01020" stroke-width="1.6"/><ellipse cx="20.7" cy="527.7" rx="2.3" ry="3.8" transform="rotate(-8 20.7 527.7)" fill="none" stroke="#d01020" stroke-width="1.6"/><path d="M19 521.5 L22.5 520.6 M18.6 521.6 L19.8 524" stroke="#d01020" stroke-width="1.6" fill="none"/></g><circle cx="14" cy="515.7" r="1.9" fill="#f00"/><g transform="translate(35.2 0)" opacity="0.45"><line x1="5.1" y1="528.7" x2="21" y2="507" stroke="#111" stroke-width="1"/><path d="M8 517.2 L19.6 519.2 L19.8 521.6 L9.4 520.2 Z" fill="#eee" stroke="#555" stroke-width="0.6"/><path d="M14.4 509.2 L16.6 509.2 L19.6 518.6 L17.4 519.4 Z" fill="#eee" stroke="#555" stroke-width="0.6"/><ellipse cx="26.7" cy="519.6" rx="4" ry="2.4" transform="rotate(-12 26.7 519.6)" fill="none" stroke="#d01020" stroke-width="1.6"/><ellipse cx="20.7" cy="527.7" rx="2.3" ry="3.8" transform="rotate(-8 20.7 527.7)" fill="none" stroke="#d01020" stroke-width="1.6"/><path d="M19 521.5 L22.5 520.6 M18.6 521.6 L19.8 524" stroke="#d01020" stroke-width="1.6" fill="none"/></g><circle cx="50.1" cy="513.8" r="1.9" fill="#f07070"/><circle cx="44.8" cy="522.2" r="1.9" fill="#f07070"/><path d="M12.3 544.6 V564.1 M23.6 544.6 V564.1 M5.5 554.4 H12.3 M23.6 554.4 H30.6" stroke="#111" stroke-width="1.1"/><line x1="12.3" y1="554.4" x2="23.6" y2="554.4" stroke="#999" stroke-width="0.6"/><circle cx="12.3" cy="554.4" r="1.9" fill="#f00"/><circle cx="23.6" cy="554.4" r="1.9" fill="#f00"/><path d="M44.4 544.6 V564.1 M55.6 544.6 V564.1 M55.6 551.4 H62.9 M55.6 558.3 H62.9" stroke="#111" stroke-width="1.1"/><path d="M44.4 551.4 H55.6 M44.4 558.3 H55.6" stroke="#aaa" stroke-width="0.6" stroke-dasharray="1.5 1"/><circle cx="55.6" cy="551.4" r="1.9" fill="#f00"/><circle cx="55.6" cy="558.3" r="1.9" fill="#f00"/><path d="M12.3 579.8 V599.5 M23.6 579.8 V599.5" stroke="#111" stroke-width="1.1"/><line x1="12.3" y1="589.7" x2="23.6" y2="589.7" stroke="#111" stroke-width="1.4"/><circle cx="12.3" cy="589.7" r="1.9" fill="#f00"/><circle cx="23.6" cy="589.7" r="1.9" fill="#f00"/><path d="M6.4 588.2 L9.4 591.2 M9.4 588.2 L6.4 591.2 M26.6 588.2 L29.6 591.2 M29.6 588.2 L26.6 591.2" stroke="#5a5aff" stroke-width="0.7"/><path d="M41.9 600.9 L49.9 593 M55.6 587.5 L64.3 578.8" stroke="#111" stroke-width="1"/><circle cx="52.5" cy="590.4" r="1.9" fill="#f00"/><rect x="6.8" y="626.5" width="23.1" height="13.8" fill="#fff" stroke="#111" stroke-width="0.9"/><line x1="20.4" y1="628.2" x2="20.4" y2="638.8" stroke="#111" stroke-width="1"/><text x="8.4" y="638.6" font-family="Liberation Serif, serif" font-size="14.5" fill="#111" stroke="none">A</text><rect x="40.2" y="626.1" width="25.8" height="15.3" fill="#f4f4f4" stroke="#222" stroke-width="0.9"/><line x1="53.5" y1="626.1" x2="53.5" y2="641.4" stroke="#222" stroke-width="0.9"/><circle cx="47" cy="634.2" r="2.6" stroke="#222" stroke-width="0.8"/><path d="M42.6 634.2 H51.4 M47 629.8 V638.6" stroke="#222" stroke-width="0.8"/><text x="55.6" y="639" font-family="Liberation Sans, sans-serif" font-size="10.5" fill="#111" stroke="none">.1</text><g transform="translate(49.7 632.6) rotate(-43.3)"><path d="M0 0 L3.4 -1.5 L3.4 1.5 Z" fill="#e8c890" stroke="#7a4a10" stroke-width="0.5"/><path d="M0 0 L1.3 -0.5 L1.3 0.5 Z" fill="#222"/><rect x="3.4" y="-1.5" width="10.7" height="3.0" fill="#f2a818" stroke="#9a6010" stroke-width="0.5"/><rect x="14.1" y="-1.5" width="2.2" height="3.0" rx="0.8" fill="#e03020" stroke="#902010" stroke-width="0.4"/></g><clipPath id="hc"><path d="M6.5 678.5 V671.3 L13.7 664.5 H27.5 V678.5 Z"/></clipPath><path d="M6.5 678.5 V671.3 L13.7 664.5 H27.5 V678.5 Z" fill="#e8e8e8" stroke="#333" stroke-width="0.9"/><g clip-path="url(#hc)" stroke="#444" stroke-width="0.6"><line x1="-12" y1="680" x2="6" y2="662"/><line x1="-9" y1="680" x2="9" y2="662"/><line x1="-6" y1="680" x2="12" y2="662"/><line x1="-3" y1="680" x2="15" y2="662"/><line x1="0" y1="680" x2="18" y2="662"/><line x1="3" y1="680" x2="21" y2="662"/><line x1="6" y1="680" x2="24" y2="662"/><line x1="9" y1="680" x2="27" y2="662"/><line x1="12" y1="680" x2="30" y2="662"/><line x1="15" y1="680" x2="33" y2="662"/><line x1="18" y1="680" x2="36" y2="662"/><line x1="21" y1="680" x2="39" y2="662"/><line x1="24" y1="680" x2="42" y2="662"/><line x1="27" y1="680" x2="45" y2="662"/></g><circle cx="19.8" cy="672.3" r="2.9" fill="#fff" stroke="#222" stroke-width="0.9"/><g transform="translate(17.2 668.0) rotate(-43.5)"><path d="M0 0 L3.4 -1.5 L3.4 1.5 Z" fill="#e8c890" stroke="#7a4a10" stroke-width="0.5"/><path d="M0 0 L1.3 -0.5 L1.3 0.5 Z" fill="#222"/><rect x="3.4" y="-1.5" width="10.7" height="3.0" fill="#f2a818" stroke="#9a6010" stroke-width="0.5"/><rect x="14.1" y="-1.5" width="2.2" height="3.0" rx="0.8" fill="#e03020" stroke="#902010" stroke-width="0.4"/></g><path d="M22.6 703 Q18 698 15.4 703.5 Q14 706.4 12.6 707" stroke="#999" stroke-width="0.9"/><g transform="translate(25 711.6) rotate(-17)"><rect x="-3.9" y="-9.6" width="7.8" height="19.2" rx="2.6" fill="#d65a5e" stroke="#c04a50" stroke-width="0.4"/><rect x="-3.9" y="-9.6" width="2.8" height="19.2" rx="1.4" fill="#e88a8c" opacity="0.7"/><ellipse cx="0" cy="-8.6" rx="3.6" ry="1.4" fill="#c03a40"/></g><g stroke="#e8d040" stroke-width="0.8"><path d="M9.4 702.4 V711.6 M4.8 707 H14 M6.2 703.8 L12.6 710.2 M12.6 703.8 L6.2 710.2"/></g><circle cx="9.4" cy="707" r="2.2" fill="#f8e070"/><circle cx="9.4" cy="707" r="1" fill="#f8a8a0"/><rect x="21.4" y="745.4" width="7.9" height="6.4" fill="#bdbdbd" stroke="#8a8a8a" stroke-width="0.8"/><rect x="6.8" y="756.2" width="7.9" height="6.4" fill="#bdbdbd" stroke="#8a8a8a" stroke-width="0.8"/><rect x="11.3" y="749.7" width="13.3" height="8.7" fill="#f6f2e0" stroke="#9a9a9a" stroke-width="0.9"/><rect x="46.2" y="749.7" width="13.3" height="8.7" fill="#f6f2e0" stroke="#9a9a9a" stroke-width="0.9"/><rect x="56.4" y="745.4" width="7.9" height="6.4" fill="#bdbdbd" stroke="#8a8a8a" stroke-width="0.8"/><rect x="41.9" y="756.2" width="7.9" height="6.4" fill="#bdbdbd" stroke="#8a8a8a" stroke-width="0.8"/><rect x="8.7" y="785.7" width="17" height="5.8" rx="1.4" fill="#f4d84c" stroke="#9a9a9a" stroke-width="0.8"/><path d="M25.7 788.6 H27.8 V794.8 H18 Q16.4 795 16 798" stroke="#8a8a8a" stroke-width="0.9"/></g></g></svg>
<!-- p_canvas -->
<div id="tabbar" class="a"></div><div id="hruler" class="a"></div><div id="vruler" class="a"></div><div id="cv" class="a"></div><div id="vsb" class="a"></div><div id="hsb" class="a"></div><div class="a" style="left:1143px;top:285px;width:7.5px;height:316px;border-radius:4px;background:#7f7f7f"></div><div class="a" style="left:243px;top:736px;width:680px;height:7.5px;border-radius:4px;background:#7f7f7f"></div><div class="a" style="left:1099px;top:732px;width:55px;height:16px;background:#e9e9e9"></div><span class="t" style="left:1118.80px;top:734.95px;font-size:12.5px;line-height:12.5px;letter-spacing:-0.184px;color:#111;">1 &lt; 10</span><span class="t" style="left:602.60px;top:113.55px;font-size:12.5px;line-height:12.5px;letter-spacing:-0.019px;color:#1a1a1a;">* offset.dxf</span><svg class="a" style="left:92px;top:109px" width="22" height="22" viewBox="92 109 22 22"><defs><linearGradient id="gQ" x1="0" y1="0" x2="1" y2="1"><stop offset="0" stop-color="#8a9cc8"/><stop offset="0.45" stop-color="#2a448e"/><stop offset="1" stop-color="#1c347c"/></linearGradient></defs><circle cx="102.1" cy="118.8" r="5.6" fill="#fafafa" stroke="url(#gQ)" stroke-width="1.9"/><path d="M98.6 120.6 H101.8 M101.6 115.6 V120.4" stroke="#c8c8c8" stroke-width="0.6"/><path d="M98.8 120.9 L101.6 120.2 M103 116 L103.8 117.6" stroke="#e88" stroke-width="0.6"/><line x1="102.3" y1="119" x2="106.6" y2="123.4" stroke="#f2a818" stroke-width="1.9"/><line x1="102.6" y1="118.8" x2="106.6" y2="122.8" stroke="#f8d048" stroke-width="0.7"/><circle cx="107.3" cy="124.2" r="1.2" fill="#e06060"/></svg><svg class="a" style="left:95px;top:155px" width="1044" height="577" viewBox="95 155 1044 577"><defs><pattern id="gd" x="-85.00" y="-123.00" width="22.5" height="22.5" patternUnits="userSpaceOnUse"><rect x="0" y="0" width="1" height="1" fill="#343434"/></pattern><clipPath id="cvclip"><rect x="95" y="155" width="1044" height="577"/></clipPath></defs><g clip-path="url(#cvclip)"><g stroke="#0e0e0e" stroke-width="2"><line x1="140" y1="155" x2="140" y2="732"/><line x1="365" y1="155" x2="365" y2="732"/><line x1="590" y1="155" x2="590" y2="732"/><line x1="815" y1="155" x2="815" y2="732"/><line x1="1040" y1="155" x2="1040" y2="732"/><line x1="95" y1="327" x2="1139" y2="327"/><line x1="95" y1="552" x2="1139" y2="552"/></g><rect x="95" y="155" width="1044" height="577" fill="url(#gd)"/><g fill="none" stroke-width="1.25" stroke-linecap="butt"><path d="M275.00 552.00 L365.00 327.00" stroke="#fff"/><path d="M285.45 556.18 L375.45 331.18" stroke="#f00"/><path d="M500.00 327.00 A144.51 144.51 0 0 0 410.00 552.00" stroke="#fff"/><path d="M502.19 338.03 A133.26 133.26 0 0 0 419.20 545.52" stroke="#f00"/><circle cx="612.50" cy="439.50" r="112.50" stroke="#fff"/><circle cx="612.50" cy="439.50" r="101.25" stroke="#f00"/><ellipse cx="815.00" cy="439.50" rx="36.00" ry="112.50" stroke="#fff"/><path d="M839.75 439.50 L839.75 438.55 L839.74 437.60 L839.74 436.65 L839.73 435.70 L839.72 434.75 L839.70 433.80 L839.69 432.85 L839.67 431.90 L839.64 430.96 L839.62 430.01 L839.59 429.06 L839.56 428.12 L839.53 427.17 L839.49 426.23 L839.45 425.29 L839.41 424.35 L839.37 423.41 L839.32 422.47 L839.27 421.53 L839.22 420.60 L839.17 419.66 L839.11 418.73 L839.05 417.80 L838.99 416.87 L838.92 415.95 L838.86 415.02 L838.79 414.10 L838.72 413.18 L838.64 412.26 L838.56 411.34 L838.48 410.43 L838.40 409.52 L838.32 408.61 L838.23 407.70 L838.14 406.80 L838.05 405.90 L837.95 405.00 L837.86 404.11 L837.76 403.21 L837.65 402.32 L837.55 401.44 L837.44 400.56 L837.33 399.68 L837.22 398.80 L837.11 397.93 L836.99 397.06 L836.87 396.19 L836.75 395.33 L836.63 394.47 L836.50 393.62 L836.37 392.76 L836.24 391.92 L836.11 391.08 L835.97 390.24 L835.84 389.40 L835.70 388.57 L835.55 387.75 L835.41 386.92 L835.26 386.11 L835.11 385.29 L834.96 384.49 L834.81 383.68 L834.66 382.88 L834.50 382.09 L834.34 381.30 L834.18 380.52 L834.01 379.74 L833.85 378.96 L833.68 378.20 L833.51 377.43 L833.34 376.67 L833.17 375.92 L832.99 375.17 L832.81 374.43 L832.64 373.70 L832.45 372.97 L832.27 372.24 L832.09 371.52 L831.90 370.81 L831.71 370.10 L831.52 369.40 L831.33 368.71 L831.14 368.02 L830.94 367.34 L830.75 366.66 L830.55 365.99 L830.35 365.33 L830.15 364.67 L829.95 364.02 L829.74 363.38 L829.54 362.74 L829.33 362.11 L829.12 361.49 L828.91 360.87 L828.70 360.27 L828.49 359.66 L828.28 359.07 L828.06 358.48 L827.85 357.90 L827.63 357.33 L827.41 356.76 L827.19 356.21 L826.97 355.66 L826.75 355.11 L826.53 354.58 L826.31 354.05 L826.09 353.53 L825.86 353.02 L825.64 352.52 L825.42 352.02 L825.19 351.53 L824.97 351.06 L824.74 350.58 L824.52 350.12 L824.29 349.67 L824.06 349.22 L823.84 348.79 L823.61 348.36 L823.39 347.94 L823.16 347.53 L822.94 347.12 L822.71 346.73 L822.49 346.35 L822.26 345.97 L822.04 345.60 L821.82 345.25 L821.60 344.90 L821.38 344.56 L821.16 344.23 L820.94 343.91 L820.72 343.59 L820.51 343.29 L820.29 343.00 L820.08 342.72 L819.87 342.44 L819.67 342.18 L819.46 341.92 L819.26 341.68 L819.06 341.44 L818.86 341.21 L818.67 341.00 L818.48 340.79 L818.29 340.59 L818.11 340.40 L817.93 340.22 L817.75 340.05 L817.58 339.89 L817.42 339.74 L817.25 339.59 L817.10 339.46 L816.94 339.33 L816.79 339.22 L816.65 339.11 L816.52 339.01 L816.39 338.91 L816.26 338.83 L816.14 338.75 L816.03 338.68 L815.92 338.62 L815.82 338.56 L815.73 338.51 L815.64 338.47 L815.56 338.43 L815.49 338.40 L815.42 338.37 L815.36 338.34 L815.30 338.32 L815.25 338.30 L815.21 338.29 L815.17 338.28 L815.14 338.27 L815.11 338.26 L815.09 338.26 L815.07 338.26 L815.05 338.25 L815.04 338.25 L815.02 338.25 L815.02 338.25 L815.01 338.25 L815.00 338.25 L814.99 338.25 L814.98 338.25 L814.98 338.25 L814.96 338.25 L814.95 338.25 L814.93 338.26 L814.91 338.26 L814.89 338.26 L814.86 338.27 L814.83 338.28 L814.79 338.29 L814.75 338.30 L814.70 338.32 L814.64 338.34 L814.58 338.37 L814.51 338.40 L814.44 338.43 L814.36 338.47 L814.27 338.51 L814.18 338.56 L814.08 338.62 L813.97 338.68 L813.86 338.75 L813.74 338.83 L813.61 338.91 L813.48 339.01 L813.35 339.11 L813.21 339.22 L813.06 339.33 L812.90 339.46 L812.75 339.59 L812.58 339.74 L812.42 339.89 L812.25 340.05 L812.07 340.22 L811.89 340.40 L811.71 340.59 L811.52 340.79 L811.33 341.00 L811.14 341.21 L810.94 341.44 L810.74 341.68 L810.54 341.92 L810.33 342.18 L810.13 342.44 L809.92 342.72 L809.71 343.00 L809.49 343.29 L809.28 343.59 L809.06 343.91 L808.84 344.23 L808.62 344.56 L808.40 344.90 L808.18 345.25 L807.96 345.60 L807.74 345.97 L807.51 346.35 L807.29 346.73 L807.06 347.12 L806.84 347.53 L806.61 347.94 L806.39 348.36 L806.16 348.79 L805.94 349.22 L805.71 349.67 L805.48 350.12 L805.26 350.58 L805.03 351.06 L804.81 351.53 L804.58 352.02 L804.36 352.52 L804.14 353.02 L803.91 353.53 L803.69 354.05 L803.47 354.58 L803.25 355.11 L803.03 355.66 L802.81 356.21 L802.59 356.76 L802.37 357.33 L802.15 357.90 L801.94 358.48 L801.72 359.07 L801.51 359.66 L801.30 360.27 L801.09 360.87 L800.88 361.49 L800.67 362.11 L800.46 362.74 L800.26 363.38 L800.05 364.02 L799.85 364.67 L799.65 365.33 L799.45 365.99 L799.25 366.66 L799.06 367.34 L798.86 368.02 L798.67 368.71 L798.48 369.40 L798.29 370.10 L798.10 370.81 L797.91 371.52 L797.73 372.24 L797.55 372.97 L797.36 373.70 L797.19 374.43 L797.01 375.17 L796.83 375.92 L796.66 376.67 L796.49 377.43 L796.32 378.20 L796.15 378.96 L795.99 379.74 L795.82 380.52 L795.66 381.30 L795.50 382.09 L795.34 382.88 L795.19 383.68 L795.04 384.49 L794.89 385.29 L794.74 386.11 L794.59 386.92 L794.45 387.75 L794.30 388.57 L794.16 389.40 L794.03 390.24 L793.89 391.08 L793.76 391.92 L793.63 392.76 L793.50 393.62 L793.37 394.47 L793.25 395.33 L793.13 396.19 L793.01 397.06 L792.89 397.93 L792.78 398.80 L792.67 399.68 L792.56 400.56 L792.45 401.44 L792.35 402.32 L792.24 403.21 L792.14 404.11 L792.05 405.00 L791.95 405.90 L791.86 406.80 L791.77 407.70 L791.68 408.61 L791.60 409.52 L791.52 410.43 L791.44 411.34 L791.36 412.26 L791.28 413.18 L791.21 414.10 L791.14 415.02 L791.08 415.95 L791.01 416.87 L790.95 417.80 L790.89 418.73 L790.83 419.66 L790.78 420.60 L790.73 421.53 L790.68 422.47 L790.63 423.41 L790.59 424.35 L790.55 425.29 L790.51 426.23 L790.47 427.17 L790.44 428.12 L790.41 429.06 L790.38 430.01 L790.36 430.96 L790.33 431.90 L790.31 432.85 L790.30 433.80 L790.28 434.75 L790.27 435.70 L790.26 436.65 L790.26 437.60 L790.25 438.55 L790.25 439.50 L790.25 440.45 L790.26 441.40 L790.26 442.35 L790.27 443.30 L790.28 444.25 L790.30 445.20 L790.31 446.15 L790.33 447.10 L790.36 448.04 L790.38 448.99 L790.41 449.94 L790.44 450.88 L790.47 451.83 L790.51 452.77 L790.55 453.71 L790.59 454.65 L790.63 455.59 L790.68 456.53 L790.73 457.47 L790.78 458.40 L790.83 459.34 L790.89 460.27 L790.95 461.20 L791.01 462.13 L791.08 463.05 L791.14 463.98 L791.21 464.90 L791.28 465.82 L791.36 466.74 L791.44 467.66 L791.52 468.57 L791.60 469.48 L791.68 470.39 L791.77 471.30 L791.86 472.20 L791.95 473.10 L792.05 474.00 L792.14 474.89 L792.24 475.79 L792.35 476.68 L792.45 477.56 L792.56 478.44 L792.67 479.32 L792.78 480.20 L792.89 481.07 L793.01 481.94 L793.13 482.81 L793.25 483.67 L793.37 484.53 L793.50 485.38 L793.63 486.24 L793.76 487.08 L793.89 487.92 L794.03 488.76 L794.16 489.60 L794.30 490.43 L794.45 491.25 L794.59 492.08 L794.74 492.89 L794.89 493.71 L795.04 494.51 L795.19 495.32 L795.34 496.12 L795.50 496.91 L795.66 497.70 L795.82 498.48 L795.99 499.26 L796.15 500.04 L796.32 500.80 L796.49 501.57 L796.66 502.33 L796.83 503.08 L797.01 503.83 L797.19 504.57 L797.36 505.30 L797.55 506.03 L797.73 506.76 L797.91 507.48 L798.10 508.19 L798.29 508.90 L798.48 509.60 L798.67 510.29 L798.86 510.98 L799.06 511.66 L799.25 512.34 L799.45 513.01 L799.65 513.67 L799.85 514.33 L800.05 514.98 L800.26 515.62 L800.46 516.26 L800.67 516.89 L800.88 517.51 L801.09 518.13 L801.30 518.73 L801.51 519.34 L801.72 519.93 L801.94 520.52 L802.15 521.10 L802.37 521.67 L802.59 522.24 L802.81 522.79 L803.03 523.34 L803.25 523.89 L803.47 524.42 L803.69 524.95 L803.91 525.47 L804.14 525.98 L804.36 526.48 L804.58 526.98 L804.81 527.47 L805.03 527.94 L805.26 528.42 L805.48 528.88 L805.71 529.33 L805.94 529.78 L806.16 530.21 L806.39 530.64 L806.61 531.06 L806.84 531.47 L807.06 531.88 L807.29 532.27 L807.51 532.65 L807.74 533.03 L807.96 533.40 L808.18 533.75 L808.40 534.10 L808.62 534.44 L808.84 534.77 L809.06 535.09 L809.28 535.41 L809.49 535.71 L809.71 536.00 L809.92 536.28 L810.13 536.56 L810.33 536.82 L810.54 537.08 L810.74 537.32 L810.94 537.56 L811.14 537.79 L811.33 538.00 L811.52 538.21 L811.71 538.41 L811.89 538.60 L812.07 538.78 L812.25 538.95 L812.42 539.11 L812.58 539.26 L812.75 539.41 L812.90 539.54 L813.06 539.67 L813.21 539.78 L813.35 539.89 L813.48 539.99 L813.61 540.09 L813.74 540.17 L813.86 540.25 L813.97 540.32 L814.08 540.38 L814.18 540.44 L814.27 540.49 L814.36 540.53 L814.44 540.57 L814.51 540.60 L814.58 540.63 L814.64 540.66 L814.70 540.68 L814.75 540.70 L814.79 540.71 L814.83 540.72 L814.86 540.73 L814.89 540.74 L814.91 540.74 L814.93 540.74 L814.95 540.75 L814.96 540.75 L814.98 540.75 L814.98 540.75 L814.99 540.75 L815.00 540.75 L815.01 540.75 L815.02 540.75 L815.02 540.75 L815.04 540.75 L815.05 540.75 L815.07 540.74 L815.09 540.74 L815.11 540.74 L815.14 540.73 L815.17 540.72 L815.21 540.71 L815.25 540.70 L815.30 540.68 L815.36 540.66 L815.42 540.63 L815.49 540.60 L815.56 540.57 L815.64 540.53 L815.73 540.49 L815.82 540.44 L815.92 540.38 L816.03 540.32 L816.14 540.25 L816.26 540.17 L816.39 540.09 L816.52 539.99 L816.65 539.89 L816.79 539.78 L816.94 539.67 L817.10 539.54 L817.25 539.41 L817.42 539.26 L817.58 539.11 L817.75 538.95 L817.93 538.78 L818.11 538.60 L818.29 538.41 L818.48 538.21 L818.67 538.00 L818.86 537.79 L819.06 537.56 L819.26 537.32 L819.46 537.08 L819.67 536.82 L819.87 536.56 L820.08 536.28 L820.29 536.00 L820.51 535.71 L820.72 535.41 L820.94 535.09 L821.16 534.77 L821.38 534.44 L821.60 534.10 L821.82 533.75 L822.04 533.40 L822.26 533.03 L822.49 532.65 L822.71 532.27 L822.94 531.88 L823.16 531.47 L823.39 531.06 L823.61 530.64 L823.84 530.21 L824.06 529.78 L824.29 529.33 L824.52 528.88 L824.74 528.42 L824.97 527.94 L825.19 527.47 L825.42 526.98 L825.64 526.48 L825.86 525.98 L826.09 525.47 L826.31 524.95 L826.53 524.42 L826.75 523.89 L826.97 523.34 L827.19 522.79 L827.41 522.24 L827.63 521.67 L827.85 521.10 L828.06 520.52 L828.28 519.93 L828.49 519.34 L828.70 518.73 L828.91 518.13 L829.12 517.51 L829.33 516.89 L829.54 516.26 L829.74 515.62 L829.95 514.98 L830.15 514.33 L830.35 513.67 L830.55 513.01 L830.75 512.34 L830.94 511.66 L831.14 510.98 L831.33 510.29 L831.52 509.60 L831.71 508.90 L831.90 508.19 L832.09 507.48 L832.27 506.76 L832.45 506.03 L832.64 505.30 L832.81 504.57 L832.99 503.83 L833.17 503.08 L833.34 502.33 L833.51 501.57 L833.68 500.80 L833.85 500.04 L834.01 499.26 L834.18 498.48 L834.34 497.70 L834.50 496.91 L834.66 496.12 L834.81 495.32 L834.96 494.51 L835.11 493.71 L835.26 492.89 L835.41 492.08 L835.55 491.25 L835.70 490.43 L835.84 489.60 L835.97 488.76 L836.11 487.92 L836.24 487.08 L836.37 486.24 L836.50 485.38 L836.63 484.53 L836.75 483.67 L836.87 482.81 L836.99 481.94 L837.11 481.07 L837.22 480.20 L837.33 479.32 L837.44 478.44 L837.55 477.56 L837.65 476.68 L837.76 475.79 L837.86 474.89 L837.95 474.00 L838.05 473.10 L838.14 472.20 L838.23 471.30 L838.32 470.39 L838.40 469.48 L838.48 468.57 L838.56 467.66 L838.64 466.74 L838.72 465.82 L838.79 464.90 L838.86 463.98 L838.92 463.05 L838.99 462.13 L839.05 461.20 L839.11 460.27 L839.17 459.34 L839.22 458.40 L839.27 457.47 L839.32 456.53 L839.37 455.59 L839.41 454.65 L839.45 453.71 L839.49 452.77 L839.53 451.83 L839.56 450.88 L839.59 449.94 L839.62 448.99 L839.64 448.04 L839.67 447.10 L839.69 446.15 L839.70 445.20 L839.72 444.25 L839.73 443.30 L839.74 442.35 L839.74 441.40 L839.75 440.45 L839.75 439.50 Z" stroke="#f00" stroke-linejoin="miter"/><path d="M905.00 552.00 C1017.50 507.00 905.00 394.50 995.00 327.00" stroke="#fff"/><path d="M909.18 562.45 L910.98 561.71 L912.74 560.97 L914.48 560.21 L916.18 559.44 L917.86 558.66 L919.50 557.86 L921.11 557.05 L922.70 556.23 L924.25 555.40 L925.78 554.55 L927.27 553.69 L928.74 552.82 L930.18 551.93 L931.59 551.03 L932.97 550.12 L934.32 549.20 L935.64 548.26 L936.94 547.31 L938.21 546.35 L939.45 545.37 L940.67 544.39 L941.85 543.39 L943.01 542.38 L944.14 541.35 L945.25 540.32 L946.32 539.27 L947.37 538.21 L948.40 537.14 L949.39 536.05 L950.36 534.96 L951.31 533.86 L952.22 532.74 L953.11 531.62 L953.98 530.49 L954.82 529.34 L955.63 528.19 L956.42 527.03 L957.18 525.86 L957.91 524.68 L958.62 523.49 L959.31 522.30 L959.97 521.10 L960.61 519.89 L961.22 518.68 L961.81 517.46 L962.37 516.23 L962.92 515.00 L963.44 513.76 L963.93 512.52 L964.41 511.28 L964.86 510.03 L965.30 508.78 L965.71 507.52 L966.10 506.26 L966.47 505.00 L966.82 503.73 L967.16 502.46 L967.47 501.19 L967.77 499.92 L968.05 498.65 L968.31 497.37 L968.56 496.09 L968.78 494.81 L969.00 493.53 L969.19 492.25 L969.38 490.96 L969.55 489.68 L969.70 488.39 L969.84 487.11 L969.97 485.82 L970.08 484.53 L970.18 483.24 L970.27 481.95 L970.35 480.67 L970.42 479.38 L970.48 478.09 L970.53 476.80 L970.56 475.51 L970.59 474.22 L970.61 472.92 L970.62 471.63 L970.62 470.34 L970.62 469.05 L970.60 467.76 L970.58 466.47 L970.55 465.18 L970.52 463.90 L970.48 462.61 L970.43 461.32 L970.38 460.03 L970.33 458.74 L970.27 457.46 L970.20 456.17 L970.14 454.88 L970.06 453.60 L969.99 452.32 L969.91 451.03 L969.83 449.75 L969.75 448.47 L969.66 447.19 L969.58 445.91 L969.49 444.63 L969.40 443.36 L969.31 442.08 L969.22 440.81 L969.14 439.53 L969.05 438.26 L968.96 437.00 L968.87 435.73 L968.79 434.46 L968.70 433.20 L968.62 431.94 L968.54 430.68 L968.47 429.42 L968.39 428.17 L968.32 426.91 L968.26 425.66 L968.19 424.41 L968.13 423.17 L968.08 421.93 L968.03 420.69 L967.99 419.45 L967.95 418.22 L967.91 416.99 L967.88 415.76 L967.86 414.53 L967.85 413.31 L967.84 412.09 L967.83 410.88 L967.84 409.67 L967.85 408.46 L967.87 407.26 L967.90 406.06 L967.94 404.87 L967.98 403.68 L968.04 402.49 L968.10 401.31 L968.17 400.13 L968.25 398.96 L968.34 397.79 L968.45 396.63 L968.56 395.47 L968.68 394.31 L968.81 393.16 L968.96 392.02 L969.11 390.88 L969.28 389.74 L969.46 388.61 L969.65 387.49 L969.85 386.37 L970.06 385.25 L970.29 384.14 L970.53 383.04 L970.78 381.94 L971.05 380.84 L971.33 379.76 L971.62 378.67 L971.93 377.59 L972.25 376.52 L972.59 375.45 L972.94 374.39 L973.30 373.33 L973.69 372.27 L974.08 371.22 L974.50 370.18 L974.92 369.14 L975.37 368.11 L975.83 367.07 L976.31 366.05 L976.81 365.03 L977.32 364.01 L977.85 362.99 L978.40 361.99 L978.97 360.98 L979.56 359.98 L980.17 358.98 L980.80 357.98 L981.45 356.99 L982.12 356.01 L982.81 355.02 L983.52 354.04 L984.25 353.06 L985.01 352.09 L985.79 351.12 L986.59 350.15 L987.42 349.18 L988.27 348.22 L989.14 347.26 L990.04 346.31 L990.97 345.35 L991.92 344.40 L992.90 343.46 L993.91 342.51 L994.94 341.57 L996.00 340.63 L997.09 339.70 L998.21 338.77 L999.36 337.84 L1000.54 336.92 L1001.75 336.00" stroke="#f00" stroke-linejoin="round"/></g></g></svg><svg class="a" style="left:72px;top:132px" width="1083" height="616" viewBox="72 132 1083 616"><g stroke="#5a5a5a" stroke-width="1"><line x1="95.5" y1="148.2" x2="95.5" y2="155"/><line x1="117.5" y1="148.2" x2="117.5" y2="155"/><line x1="140.5" y1="148.2" x2="140.5" y2="155"/><line x1="162.5" y1="148.2" x2="162.5" y2="155"/><line x1="185.5" y1="148.2" x2="185.5" y2="155"/><line x1="207.5" y1="148.2" x2="207.5" y2="155"/><line x1="230.5" y1="148.2" x2="230.5" y2="155"/><line x1="252.5" y1="148.2" x2="252.5" y2="155"/><line x1="275.5" y1="148.2" x2="275.5" y2="155"/><line x1="297.5" y1="148.2" x2="297.5" y2="155"/><line x1="320.5" y1="148.2" x2="320.5" y2="155"/><line x1="342.5" y1="148.2" x2="342.5" y2="155"/><line x1="365.5" y1="148.2" x2="365.5" y2="155"/><line x1="387.5" y1="148.2" x2="387.5" y2="155"/><line x1="410.5" y1="148.2" x2="410.5" y2="155"/><line x1="432.5" y1="148.2" x2="432.5" y2="155"/><line x1="455.5" y1="148.2" x2="455.5" y2="155"/><line x1="477.5" y1="148.2" x2="477.5" y2="155"/><line x1="500.5" y1="148.2" x2="500.5" y2="155"/><line x1="522.5" y1="148.2" x2="522.5" y2="155"/><line x1="545.5" y1="148.2" x2="545.5" y2="155"/><line x1="567.5" y1="148.2" x2="567.5" y2="155"/><line x1="590.5" y1="148.2" x2="590.5" y2="155"/><line x1="612.5" y1="148.2" x2="612.5" y2="155"/><line x1="635.5" y1="148.2" x2="635.5" y2="155"/><line x1="657.5" y1="148.2" x2="657.5" y2="155"/><line x1="680.5" y1="148.2" x2="680.5" y2="155"/><line x1="702.5" y1="148.2" x2="702.5" y2="155"/><line x1="725.5" y1="148.2" x2="725.5" y2="155"/><line x1="747.5" y1="148.2" x2="747.5" y2="155"/><line x1="770.5" y1="148.2" x2="770.5" y2="155"/><line x1="792.5" y1="148.2" x2="792.5" y2="155"/><line x1="815.5" y1="148.2" x2="815.5" y2="155"/><line x1="837.5" y1="148.2" x2="837.5" y2="155"/><line x1="860.5" y1="148.2" x2="860.5" y2="155"/><line x1="882.5" y1="148.2" x2="882.5" y2="155"/><line x1="905.5" y1="148.2" x2="905.5" y2="155"/><line x1="927.5" y1="148.2" x2="927.5" y2="155"/><line x1="950.5" y1="148.2" x2="950.5" y2="155"/><line x1="972.5" y1="148.2" x2="972.5" y2="155"/><line x1="995.5" y1="148.2" x2="995.5" y2="155"/><line x1="1017.5" y1="148.2" x2="1017.5" y2="155"/><line x1="1040.5" y1="148.2" x2="1040.5" y2="155"/><line x1="1062.5" y1="148.2" x2="1062.5" y2="155"/><line x1="1085.5" y1="148.2" x2="1085.5" y2="155"/><line x1="1107.5" y1="148.2" x2="1107.5" y2="155"/><line x1="1130.5" y1="148.2" x2="1130.5" y2="155"/><line x1="88.2" y1="709.5" x2="95" y2="709.5"/><line x1="88.2" y1="687.5" x2="95" y2="687.5"/><line x1="88.2" y1="664.5" x2="95" y2="664.5"/><line x1="88.2" y1="642.5" x2="95" y2="642.5"/><line x1="88.2" y1="619.5" x2="95" y2="619.5"/><line x1="88.2" y1="597.5" x2="95" y2="597.5"/><line x1="88.2" y1="574.5" x2="95" y2="574.5"/><line x1="88.2" y1="552.5" x2="95" y2="552.5"/><line x1="88.2" y1="529.5" x2="95" y2="529.5"/><line x1="88.2" y1="507.5" x2="95" y2="507.5"/><line x1="88.2" y1="484.5" x2="95" y2="484.5"/><line x1="88.2" y1="462.5" x2="95" y2="462.5"/><line x1="88.2" y1="439.5" x2="95" y2="439.5"/><line x1="88.2" y1="417.5" x2="95" y2="417.5"/><line x1="88.2" y1="394.5" x2="95" y2="394.5"/><line x1="88.2" y1="372.5" x2="95" y2="372.5"/><line x1="88.2" y1="349.5" x2="95" y2="349.5"/><line x1="88.2" y1="327.5" x2="95" y2="327.5"/><line x1="88.2" y1="304.5" x2="95" y2="304.5"/><line x1="88.2" y1="282.5" x2="95" y2="282.5"/><line x1="88.2" y1="259.5" x2="95" y2="259.5"/><line x1="88.2" y1="237.5" x2="95" y2="237.5"/><line x1="88.2" y1="214.5" x2="95" y2="214.5"/><line x1="88.2" y1="192.5" x2="95" y2="192.5"/><line x1="88.2" y1="169.5" x2="95" y2="169.5"/></g><path d="M609.6 145.2 L621 145.2 L615.3 151 Z" fill="#000"/><path d="M85 216 L85 228 L91.2 222 Z" fill="#000"/></svg><span class="rl" style="left:107.50px;top:133px">39</span><span class="rl" style="left:130.00px;top:133px">40</span><span class="rl" style="left:152.50px;top:133px">41</span><span class="rl" style="left:175.00px;top:133px">42</span><span class="rl" style="left:197.50px;top:133px">43</span><span class="rl" style="left:220.00px;top:133px">44</span><span class="rl" style="left:242.50px;top:133px">45</span><span class="rl" style="left:265.00px;top:133px">46</span><span class="rl" style="left:287.50px;top:133px">47</span><span class="rl" style="left:310.00px;top:133px">48</span><span class="rl" style="left:332.50px;top:133px">49</span><span class="rl" style="left:355.00px;top:133px">50</span><span class="rl" style="left:377.50px;top:133px">51</span><span class="rl" style="left:400.00px;top:133px">52</span><span class="rl" style="left:422.50px;top:133px">53</span><span class="rl" style="left:445.00px;top:133px">54</span><span class="rl" style="left:467.50px;top:133px">55</span><span class="rl" style="left:490.00px;top:133px">56</span><span class="rl" style="left:512.50px;top:133px">57</span><span class="rl" style="left:535.00px;top:133px">58</span><span class="rl" style="left:557.50px;top:133px">59</span><span class="rl" style="left:580.00px;top:133px">60</span><span class="rl" style="left:602.50px;top:133px">61</span><span class="rl" style="left:625.00px;top:133px">62</span><span class="rl" style="left:647.50px;top:133px">63</span><span class="rl" style="left:670.00px;top:133px">64</span><span class="rl" style="left:692.50px;top:133px">65</span><span class="rl" style="left:715.00px;top:133px">66</span><span class="rl" style="left:737.50px;top:133px">67</span><span class="rl" style="left:760.00px;top:133px">68</span><span class="rl" style="left:782.50px;top:133px">69</span><span class="rl" style="left:805.00px;top:133px">70</span><span class="rl" style="left:827.50px;top:133px">71</span><span class="rl" style="left:850.00px;top:133px">72</span><span class="rl" style="left:872.50px;top:133px">73</span><span class="rl" style="left:895.00px;top:133px">74</span><span class="rl" style="left:917.50px;top:133px">75</span><span class="rl" style="left:940.00px;top:133px">76</span><span class="rl" style="left:962.50px;top:133px">77</span><span class="rl" style="left:985.00px;top:133px">78</span><span class="rl" style="left:1007.50px;top:133px">79</span><span class="rl" style="left:1030.00px;top:133px">80</span><span class="rl" style="left:1052.50px;top:133px">81</span><span class="rl" style="left:1075.00px;top:133px">82</span><span class="rl" style="left:1097.50px;top:133px">83</span><span class="rl" style="left:1120.00px;top:133px">84</span><span class="rl" style="left:94.60px;top:133px;width:6px;text-align:right;overflow:hidden;direction:rtl">8</span><span class="vl" style="left:68.40px;top:704.50px">-7</span><span class="vl" style="left:68.40px;top:682.00px">-6</span><span class="vl" style="left:68.40px;top:659.50px">-5</span><span class="vl" style="left:68.40px;top:637.00px">-4</span><span class="vl" style="left:68.40px;top:614.50px">-3</span><span class="vl" style="left:68.40px;top:592.00px">-2</span><span class="vl" style="left:68.40px;top:569.50px">-1</span><span class="vl" style="left:68.40px;top:547.00px">0</span><span class="vl" style="left:68.40px;top:524.50px">1</span><span class="vl" style="left:68.40px;top:502.00px">2</span><span class="vl" style="left:68.40px;top:479.50px">3</span><span class="vl" style="left:68.40px;top:457.00px">4</span><span class="vl" style="left:68.40px;top:434.50px">5</span><span class="vl" style="left:68.40px;top:412.00px">6</span><span class="vl" style="left:68.40px;top:389.50px">7</span><span class="vl" style="left:68.40px;top:367.00px">8</span><span class="vl" style="left:68.40px;top:344.50px">9</span><span class="vl" style="left:68.40px;top:322.00px">10</span><span class="vl" style="left:68.40px;top:299.50px">11</span><span class="vl" style="left:68.40px;top:277.00px">12</span><span class="vl" style="left:68.40px;top:254.50px">13</span><span class="vl" style="left:68.40px;top:232.00px">14</span><span class="vl" style="left:68.40px;top:209.50px">15</span><span class="vl" style="left:68.40px;top:187.00px">16</span><span class="vl" style="left:68.40px;top:164.50px">17</span><span class="vl" style="left:68.40px;top:725.40px">8</span>
<!-- p_layers -->
<div id="lyt" class="a"></div><div id="lyb" class="a"></div><div id="lyl" class="a"></div><div class="lyb" style="left:1156.1px;width:58.0px"></div><div class="lyb" style="left:1215.9px;width:57.8px"></div><div class="lyb" style="left:1275.5px;width:58.0px"></div><div class="lyb" style="left:1335.3px;width:58.0px"></div><div class="lyb" style="left:1395.1px;width:58.8px"></div><svg class="a" style="left:1150px;top:105px" width="310" height="100" viewBox="1150 105 310 100"><circle cx="1163.9" cy="118.2" r="6.9" fill="#6f6f6f"/><path d="M1160.6 114.9 L1167.2 121.5 M1167.2 114.9 L1160.6 121.5" stroke="#f2f2f2" stroke-width="2" stroke-linecap="round"/><circle cx="1182.1" cy="118.2" r="6.9" fill="#6f6f6f"/><rect x="1180.6" y="115.2" width="5" height="4" fill="none" stroke="#f2f2f2" stroke-width="1"/><rect x="1178.4" y="117.4" width="5" height="4" fill="#6f6f6f" stroke="#f2f2f2" stroke-width="1"/><g opacity="1"><path d="M1177.2 143.0 Q1180.8 137.2 1185.3 137.4 Q1189.8 137.8 1192.4 143.2 Q1188.8 147.8 1184.8 147.8 Q1180.3 147.4 1177.2 143.0 Z" fill="#000"/><path d="M1179.4 143.4 Q1182.3 140.6 1185.2 140.6 Q1188.2 140.8 1190.4 143.6 Q1184.8 147.4 1179.4 143.4 Z" fill="#fff"/><circle cx="1184.8" cy="142.6" r="2.5" fill="#000"/><circle cx="1184.0" cy="142.0" r="0.8" fill="#fff" opacity="0.7"/></g><g opacity="0.75"><path d="M1237.0 143.0 Q1240.6 137.2 1245.1 137.4 Q1249.6 137.8 1252.2 143.2 Q1248.6 147.8 1244.6 147.8 Q1240.1 147.4 1237.0 143.0 Z" fill="#8a8a8a"/><path d="M1239.2 143.4 Q1242.1 140.6 1245.0 140.6 Q1248.0 140.8 1250.2 143.6 Q1244.6 147.4 1239.2 143.4 Z" fill="#fff"/><circle cx="1244.6" cy="142.6" r="2.5" fill="#8a8a8a"/><circle cx="1243.8" cy="142.0" r="0.8" fill="#fff" opacity="0.7"/></g><path d="M1304.6 137 V148.6 M1298.8 142.8 H1310.4" stroke="#a00000" stroke-width="3.2"/><path d="M1304.6 137.3 V148.3 M1299.1 142.8 H1310.1" stroke="#f00" stroke-width="2.3"/><path d="M1359 142.9 H1371.2" stroke="#a00000" stroke-width="3.2"/><path d="M1359.3 142.9 H1370.9" stroke="#f00" stroke-width="2.3"/><g transform="translate(1417.7 149.8) rotate(-43.4)"><path d="M0 0 L3.4 -1.5 L3.4 1.5 Z" fill="#e8c890" stroke="#7a4a10" stroke-width="0.5"/><path d="M0 0 L1.3 -0.5 L1.3 0.5 Z" fill="#222"/><rect x="3.4" y="-1.5" width="14.5" height="3.0" fill="#f2a818" stroke="#9a6010" stroke-width="0.5"/><rect x="17.9" y="-1.5" width="2.2" height="3.0" rx="0.8" fill="#e03020" stroke="#902010" stroke-width="0.4"/></g><rect x="1161.5" y="163.5" width="15" height="8" fill="#fff" stroke="#000" stroke-width="1"/><rect x="1161.5" y="183.5" width="15" height="8" fill="#f00" stroke="#000" stroke-width="1"/><g opacity="1"><path d="M1415.2 167.1 Q1418.8 161.3 1423.3 161.5 Q1427.8 161.9 1430.4 167.3 Q1426.8 171.9 1422.8 171.9 Q1418.3 171.5 1415.2 167.1 Z" fill="#000"/><path d="M1417.4 167.5 Q1420.3 164.7 1423.2 164.7 Q1426.2 164.9 1428.4 167.7 Q1422.8 171.5 1417.4 167.5 Z" fill="#fff"/><circle cx="1422.8" cy="166.7" r="2.5" fill="#000"/><circle cx="1422.0" cy="166.1" r="0.8" fill="#fff" opacity="0.7"/></g><g opacity="1"><path d="M1415.2 187.2 Q1418.8 181.4 1423.3 181.6 Q1427.8 182.0 1430.4 187.4 Q1426.8 192.0 1422.8 192.0 Q1418.3 191.6 1415.2 187.2 Z" fill="#000"/><path d="M1417.4 187.6 Q1420.3 184.8 1423.2 184.8 Q1426.2 185.0 1428.4 187.8 Q1422.8 191.6 1417.4 187.6 Z" fill="#fff"/><circle cx="1422.8" cy="186.8" r="2.5" fill="#000"/><circle cx="1422.0" cy="186.2" r="0.8" fill="#fff" opacity="0.7"/></g><path d="M1441.9 166.1 V163.6 A3.2 3.6 0 0 1 1448.3 163.6 V166.1" fill="none" stroke="#c6c6c6" stroke-width="1.5"/><rect x="1440.2" y="165.8" width="9.8" height="8" fill="#b9b9b9"/><path d="M1441.9 186.0 V183.5 A3.2 3.6 0 0 1 1448.3 183.5 V186.0" fill="none" stroke="#c6c6c6" stroke-width="1.5"/><rect x="1440.2" y="185.7" width="9.8" height="8" fill="#b9b9b9"/><g transform="translate(1394.4 193.4) rotate(-43.3)"><path d="M0 0 L3.4 -1.4 L3.4 1.4 Z" fill="#e8c890" stroke="#7a4a10" stroke-width="0.5"/><path d="M0 0 L1.3 -0.5 L1.3 0.5 Z" fill="#222"/><rect x="3.4" y="-1.4" width="12.9" height="2.8" fill="#f2a818" stroke="#9a6010" stroke-width="0.5"/><rect x="16.3" y="-1.4" width="2.2" height="2.8" rx="0.8" fill="#e03020" stroke="#902010" stroke-width="0.4"/></g></svg><span class="t" style="left:1276.20px;top:113.15px;font-size:12.5px;line-height:12.5px;letter-spacing:-0.270px;color:#1a1a1a;">Liste des calques</span><span class="t" style="left:1183.20px;top:160.20px;font-size:13px;line-height:13px;letter-spacing:0.000px;color:#111;">0</span><span class="t" style="left:1182.80px;top:180.20px;font-size:13px;line-height:13px;letter-spacing:0.109px;color:#111;">Décalage</span>
<!-- p_right -->
<div id="rt" class="a"></div><div class="rsel" style="top:120.2px"></div><div class="rsel" style="top:417px"></div><svg class="a" style="left:1454px;top:108px" width="46" height="690" viewBox="1454 108 46 690"><rect x="1462.2" y="116.1" width="1.5" height="1.5" fill="#a0a0a0"/><rect x="1468.3" y="116.1" width="1.5" height="1.5" fill="#a0a0a0"/><rect x="1474.4" y="116.1" width="1.5" height="1.5" fill="#a0a0a0"/><rect x="1480.5" y="116.1" width="1.5" height="1.5" fill="#a0a0a0"/><rect x="1486.6" y="116.1" width="1.5" height="1.5" fill="#a0a0a0"/><line x1="1458" y1="261.4" x2="1500" y2="261.4" stroke="#666" stroke-width="1" stroke-dasharray="1 2"/><line x1="1458" y1="409.3" x2="1500" y2="409.3" stroke="#666" stroke-width="1" stroke-dasharray="1 2"/><rect x="1463.2" y="127.2" width="27.6" height="27.4" fill="#fff" stroke="#444" stroke-width="0.8"/><rect x="1463.2" y="127.2" width="27.6" height="4.3" fill="#000"/><rect x="1464.2" y="127.9" width="3" height="3" fill="#fff"/><rect x="1463.2" y="174.3" width="27.6" height="27.4" fill="#fff" stroke="#444" stroke-width="0.8"/><rect x="1463.2" y="174.3" width="27.6" height="4.3" fill="#000"/><rect x="1464.2" y="175.0" width="3" height="3" fill="#fff"/><rect x="1463.2" y="220.3" width="27.6" height="27.4" fill="#fff" stroke="#444" stroke-width="0.8"/><rect x="1463.2" y="220.3" width="27.6" height="4.3" fill="#000"/><rect x="1464.2" y="221.0" width="3" height="3" fill="#fff"/><rect x="1463.2" y="276.3" width="27.6" height="27.4" fill="#fff" stroke="#444" stroke-width="0.8"/><rect x="1463.2" y="276.3" width="27.6" height="4.3" fill="#000"/><rect x="1464.2" y="277.0" width="3" height="3" fill="#fff"/><rect x="1463.2" y="322.0" width="27.6" height="27.4" fill="#fff" stroke="#444" stroke-width="0.8"/><rect x="1463.2" y="322.0" width="27.6" height="4.3" fill="#000"/><rect x="1464.2" y="322.7" width="3" height="3" fill="#fff"/><rect x="1463.2" y="368.3" width="27.6" height="27.4" fill="#fff" stroke="#444" stroke-width="0.8"/><rect x="1463.2" y="368.3" width="27.6" height="4.3" fill="#000"/><rect x="1464.2" y="369.0" width="3" height="3" fill="#fff"/><rect x="1463.2" y="424.1" width="27.6" height="27.4" fill="#fff" stroke="#444" stroke-width="0.8"/><rect x="1463.2" y="424.1" width="27.6" height="4.3" fill="#000"/><rect x="1464.2" y="424.8" width="3" height="3" fill="#fff"/><rect x="1463.2" y="471.2" width="27.6" height="27.4" fill="#fff" stroke="#444" stroke-width="0.8"/><rect x="1463.2" y="471.2" width="27.6" height="4.3" fill="#000"/><rect x="1464.2" y="471.9" width="3" height="3" fill="#fff"/><g stroke-width="0.6"><path d="M1470.4 141 L1477.8 137.6 V146.8 L1470.4 150 Z" fill="#9a9a9a" stroke="#444"/><path d="M1472 140.2 L1479.4 136.8 V146 L1472 149.2 Z" fill="#bcbcbc" stroke="#444"/><path d="M1473.8 139.4 L1483.6 135.6 V145.2 L1473.8 148.6 Z" fill="#f8f8f8" stroke="#555"/><path d="M1476.6 146 L1481.4 138.4 L1481.6 144.6 Z" fill="none" stroke="#f03030" stroke-width="0.8"/></g><rect x="1470.2" y="184.4" width="10.6" height="7.8" fill="#f5ecc0" stroke="#555" stroke-width="0.7"/><circle cx="1479.4" cy="191.4" r="4.4" fill="#f5ecc0" fill-opacity="0.85" stroke="#555" stroke-width="0.7"/><rect x="1468.8" y="231.2" width="16.4" height="10.6" rx="2" fill="#f4f4f2" stroke="#c4d2ea" stroke-width="1"/><rect x="1466.2" y="283.4" width="4.2" height="3.3" rx="0.6" fill="#000"/><rect x="1473.4" y="283.4" width="13.8" height="3.3" fill="#fff" stroke="#333" stroke-width="0.6"/><rect x="1466.2" y="289.5" width="4.2" height="3.3" rx="0.6" fill="#000"/><rect x="1473.4" y="289.5" width="13.8" height="3.3" fill="#fff" stroke="#333" stroke-width="0.6"/><rect x="1466.2" y="295.6" width="4.2" height="3.3" rx="0.6" fill="#000"/><rect x="1473.4" y="295.6" width="13.8" height="3.3" fill="#fff" stroke="#333" stroke-width="0.6"/><path d="M1470.2 332.4 Q1477 329.6 1483.8 332.4 L1478.8 338.6 V345 L1475.6 343.6 V338.6 Z" fill="#a8a8a8" stroke="#666" stroke-width="0.6"/><ellipse cx="1477" cy="332.2" rx="6.8" ry="1.5" fill="#8a8a8a"/><path d="M1468.8 376.8 L1473.4 380 V389 L1468.8 392 Z" fill="#e8e8e8" stroke="#444" stroke-width="0.6"/><rect x="1473.4" y="380" width="11.6" height="9" rx="1.6" fill="#9a9a9a" stroke="#666" stroke-width="0.5"/><line x1="1467.4" y1="384.5" x2="1486.8" y2="384.5" stroke="#f06060" stroke-width="0.7" stroke-dasharray="2 1" opacity="0.8"/><line x1="1465.6" y1="432.6" x2="1480.1" y2="432.6" stroke="#555" stroke-width="1" stroke-dasharray="2.2 0.5 1.4 0.4"/><line x1="1465.6" y1="436.1" x2="1479.1" y2="436.1" stroke="#555" stroke-width="1" stroke-dasharray="2.2 0.5 1.4 0.4"/><line x1="1465.6" y1="439.5" x2="1481.6" y2="439.5" stroke="#555" stroke-width="1" stroke-dasharray="2.2 0.5 1.4 0.4"/><line x1="1465.6" y1="443.0" x2="1482.6" y2="443.0" stroke="#555" stroke-width="1" stroke-dasharray="2.2 0.5 1.4 0.4"/><line x1="1463.2" y1="447" x2="1490.8" y2="447" stroke="#444" stroke-width="0.6"/><line x1="1465.4" y1="449.4" x2="1467.4" y2="449.4" stroke="#333" stroke-width="1"/><line x1="1472.4" y1="449.4" x2="1488" y2="449.4" stroke="#333" stroke-width="1.2" stroke-dasharray="2 0.4"/><rect x="1470.6" y="480.8" width="12.6" height="13.4" rx="0.8" fill="#c98a1c" stroke="#8a5a08" stroke-width="0.5"/><rect x="1472.2" y="482.4" width="9.4" height="10.4" fill="#f4f4f4"/><rect x="1474.2" y="479.4" width="5.4" height="2.8" rx="0.6" fill="#a0a094" stroke="#666" stroke-width="0.4"/><path d="M1473.6 485.4 H1480 M1473.6 487.4 H1480 M1473.6 489.4 H1478" stroke="#c8c8c8" stroke-width="0.7"/><path d="M1481.6 490 L1479 492.8 H1481.6 Z" fill="#aaa"/></svg>
<!-- p_bottom -->
<div id="cmdarea" class="a"></div><div id="hist" class="a"></div><div id="cmdin" class="a"></div><div id="cmdbtn" class="a"></div><div class="a" style="left:1139px;top:749.5px;width:15px;height:19.5px;background:#fafafa;border-left:1px solid #e4e4e4;box-sizing:border-box"></div><div class="a" style="left:1142.4px;top:750.6px;width:8px;height:16.6px;border-radius:4px;background:#7f7f7f"></div><div class="a" style="left:1132.6px;top:779.6px;width:14.4px;height:10px;box-sizing:border-box;border:1px solid #222;border-top:3px solid #000;background:#fff"></div><div id="sb" class="a"></div><span class="t" style="left:77.00px;top:751.30px;font-size:13px;line-height:13px;letter-spacing:0.132px;color:#0808e0;font-style:italic;">Commande:</span><span class="t" style="left:152.80px;top:751.30px;font-size:13px;line-height:13px;letter-spacing:0.440px;color:#0808e0;">offset</span><span class="t" style="left:72.80px;top:778.80px;font-size:13px;line-height:13px;letter-spacing:0.124px;color:#111;">Choisir ligne, arc, cercle, ellipse, spline ou polyligne :</span><span class="t" style="left:2.00px;top:807.75px;font-size:9.7px;line-height:9.7px;letter-spacing:-0.018px;color:#1c1c1c;">61.1111,14.6667</span><span class="t" style="left:2.00px;top:827.75px;font-size:9.7px;line-height:9.7px;letter-spacing:-0.107px;color:#1c1c1c;">@61.1111,14.6667</span><span class="t" style="left:256.00px;top:807.75px;font-size:9.7px;line-height:9.7px;letter-spacing:0.364px;color:#1c1c1c;">62.8465&lt;13°</span><span class="t" style="left:256.00px;top:827.75px;font-size:9.7px;line-height:9.7px;letter-spacing:0.230px;color:#1c1c1c;">@62.8465&lt;13°</span><span class="t" style="left:513.60px;top:811.95px;font-size:9.7px;line-height:9.7px;letter-spacing:0.226px;color:#1c1c1c;">Choisir ligne, arc, cercle, ellipse, spline ou</span><span class="t" style="left:663.60px;top:822.65px;font-size:9.7px;line-height:9.7px;letter-spacing:0.301px;color:#1c1c1c;">polyligne</span><span class="t" style="left:760.00px;top:817.35px;font-size:9.7px;line-height:9.7px;letter-spacing:0.166px;color:#1c1c1c;">Annuler</span><span class="t" style="left:948.80px;top:817.35px;font-size:9.7px;line-height:9.7px;letter-spacing:0.248px;color:#1c1c1c;">Aucune des entités sélectionnées.</span><svg class="a" style="left:0;top:798px" width="1500" height="46" viewBox="0 798 1500 46"><line x1="253.9" y1="802" x2="253.9" y2="842.5" stroke="#777" stroke-width="1"/><line x1="254.9" y1="802" x2="254.9" y2="842.5" stroke="#f4f4f4" stroke-width="1"/><circle cx="509.5" cy="822" r="2.8" fill="#cacaca"/><circle cx="943.5" cy="822" r="2.8" fill="#cacaca"/><circle cx="1272.0" cy="822" r="2.8" fill="#cacaca"/><path d="M723 816 Q723 805.4 732 805.4 Q741 805.4 741 816 V826 Q741 835.8 732 835.8 Q723 835.8 723 826 Z" fill="#fff" stroke="#333" stroke-width="0.9"/><path d="M723 818.6 H741 M732 805.4 V809 M732 815 V818.6" stroke="#333" stroke-width="0.8" fill="none"/><rect x="730.4" y="808.6" width="3.2" height="6.8" rx="1.6" fill="#fff" stroke="#333" stroke-width="0.8"/></svg>
<!-- p_overlay -->
<svg class="a" style="left:310px;top:40px" width="110" height="95" viewBox="310 40 110 95"><defs><filter id="rb" x="-20%" y="-20%" width="140%" height="140%"><feGaussianBlur stdDeviation="0.7"/></filter></defs><circle cx="361.2" cy="88.2" r="33.6" fill="#fff" fill-opacity="0.16"/><g filter="url(#rb)"><circle cx="361.2" cy="88.2" r="35.4" fill="none" stroke="#8aa8c8" stroke-opacity="0.38" stroke-width="5"/><circle cx="361.2" cy="88.2" r="36.6" fill="none" stroke="#a8c0da" stroke-opacity="0.4" stroke-width="1.6"/></g><path d="M361.3 88 V110.6 L366.6 105.6 L370.8 114.8 L374.4 113.2 L370.2 104.2 L376.6 104.2 Z" fill="#fff" stroke="#000" stroke-width="1.3" stroke-linejoin="round"/></svg>
</div>
</body></html>
